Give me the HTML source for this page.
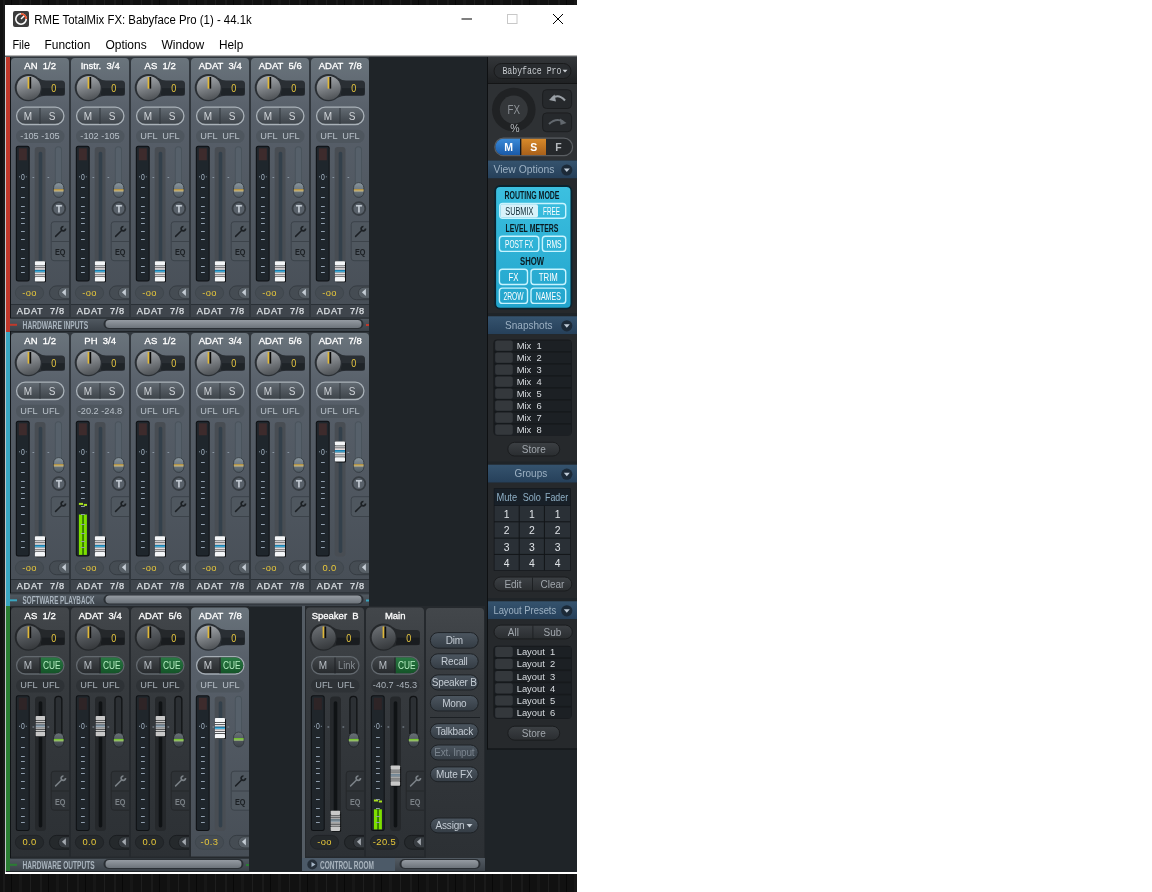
<!DOCTYPE html><html><head><meta charset="utf-8"><style>html,body{margin:0;padding:0;background:#fff;width:1152px;height:892px;overflow:hidden;position:relative} svg{will-change:transform}</style></head><body><svg width="1152" height="892" viewBox="0 0 1152 892" style="position:absolute;left:0;top:0;font-family:'Liberation Sans', sans-serif">
<defs>
<linearGradient id="panelA" x1="0" y1="0" x2="0" y2="1"><stop offset="0" stop-color="#6a747c"/><stop offset="0.2" stop-color="#58606a"/><stop offset="1" stop-color="#474e56"/></linearGradient>
<linearGradient id="panelB" x1="0" y1="0" x2="0" y2="1"><stop offset="0" stop-color="#43474b"/><stop offset="0.3" stop-color="#363a3e"/><stop offset="1" stop-color="#2c3034"/></linearGradient>
<linearGradient id="knobG" x1="0.3" y1="0" x2="0.6" y2="1"><stop offset="0" stop-color="#a8acb0"/><stop offset="0.5" stop-color="#7c8084"/><stop offset="1" stop-color="#4e5256"/></linearGradient>
<linearGradient id="knobGd" x1="0.3" y1="0" x2="0.6" y2="1"><stop offset="0" stop-color="#6c7074"/><stop offset="0.5" stop-color="#505458"/><stop offset="1" stop-color="#36393c"/></linearGradient>
<linearGradient id="valG" x1="0" y1="0" x2="0" y2="1"><stop offset="0" stop-color="#3a4046"/><stop offset="0.5" stop-color="#2c3136"/><stop offset="1" stop-color="#23272b"/></linearGradient>
<linearGradient id="msG" x1="0" y1="0" x2="0" y2="1"><stop offset="0" stop-color="#646c74"/><stop offset="1" stop-color="#3c4248"/></linearGradient>
<linearGradient id="msGd" x1="0" y1="0" x2="0" y2="1"><stop offset="0" stop-color="#44484c"/><stop offset="1" stop-color="#26292c"/></linearGradient>
<linearGradient id="cueG" x1="0" y1="0" x2="0" y2="1"><stop offset="0" stop-color="#2a7a44"/><stop offset="1" stop-color="#145428"/></linearGradient>
<linearGradient id="trimG" x1="0" y1="0" x2="0" y2="1"><stop offset="0" stop-color="#8a969e"/><stop offset="1" stop-color="#4e5860"/></linearGradient>
<linearGradient id="trimGd" x1="0" y1="0" x2="0" y2="1"><stop offset="0" stop-color="#6a7278"/><stop offset="1" stop-color="#3a4046"/></linearGradient>
<linearGradient id="barG" x1="0" y1="0" x2="0" y2="1"><stop offset="0" stop-color="#525a62"/><stop offset="1" stop-color="#3a4148"/></linearGradient>
<linearGradient id="scrG" x1="0" y1="0" x2="0" y2="1"><stop offset="0" stop-color="#959ba2"/><stop offset="1" stop-color="#6c737a"/></linearGradient>
<linearGradient id="hdrG" x1="0" y1="0" x2="0" y2="1"><stop offset="0" stop-color="#35536e"/><stop offset="1" stop-color="#26405a"/></linearGradient>
<linearGradient id="btnG" x1="0" y1="0" x2="0" y2="1"><stop offset="0" stop-color="#4c5660"/><stop offset="1" stop-color="#343c44"/></linearGradient>
<linearGradient id="btn2G" x1="0" y1="0" x2="0" y2="1"><stop offset="0" stop-color="#3c4044"/><stop offset="1" stop-color="#2a2d30"/></linearGradient>
<linearGradient id="blueG" x1="0" y1="0" x2="0" y2="1"><stop offset="0" stop-color="#3a8ad8"/><stop offset="1" stop-color="#1a5aa8"/></linearGradient>
<linearGradient id="orgG" x1="0" y1="0" x2="0" y2="1"><stop offset="0" stop-color="#d88a2a"/><stop offset="1" stop-color="#a8601a"/></linearGradient>
<linearGradient id="cyanG" x1="0" y1="0" x2="0" y2="1"><stop offset="0" stop-color="#3cc0e0"/><stop offset="1" stop-color="#22a4cc"/></linearGradient>
<linearGradient id="devG" x1="0" y1="0" x2="0" y2="1"><stop offset="0" stop-color="#333639"/><stop offset="1" stop-color="#1f2123"/></linearGradient>
<pattern id="wood" width="37" height="20" patternUnits="userSpaceOnUse"><rect width="37" height="20" fill="#111111"/><rect x="3" width="2" height="20" fill="#1a1a1a"/><rect x="11" width="1" height="20" fill="#080808"/><rect x="19" width="3" height="20" fill="#171717"/><rect x="30" width="1" height="20" fill="#1e1e1e"/></pattern>
</defs>
<rect x="0" y="0" width="1152" height="892" rx="0" fill="#ffffff" />
<rect x="0" y="0" width="577" height="5" rx="0" fill="url(#wood)" />
<rect x="0" y="0" width="5" height="892" rx="0" fill="url(#wood)" />
<rect x="0" y="874" width="577" height="18" rx="0" fill="url(#wood)" />
<rect x="5" y="5" width="572" height="869" rx="0" fill="#ffffff" />
<rect x="13" y="11" width="16" height="16" rx="2" fill="#3c3c3c" />
<circle cx="21" cy="19" r="5.2" fill="none" stroke="#fff" stroke-width="1.6"/>
<path d="M21 13.8 A5.2 5.2 0 0 1 26.2 19" fill="none" stroke="#e8502a" stroke-width="1.8"/>
<line x1="21" y1="19" x2="24" y2="16" stroke="#fff" stroke-width="1.4"/>
<text x="34.3" y="24.3" font-size="12" fill="#000" text-anchor="start" font-weight="normal" textLength="217.4" lengthAdjust="spacingAndGlyphs" >RME TotalMix FX: Babyface Pro (1) - 44.1k</text>
<rect x="461.5" y="18.5" width="10.5" height="1" rx="0" fill="#000" />
<rect x="507.5" y="14.5" width="9.5" height="9" fill="none" stroke="#c8c8c8" stroke-width="1"/>
<path d="M553 14 L563 24 M563 14 L553 24" stroke="#000" stroke-width="1"/>
<text x="12.4" y="49.2" font-size="12" fill="#000" text-anchor="start" font-weight="normal" textLength="17.6" lengthAdjust="spacingAndGlyphs" >File</text>
<text x="44.5" y="49.2" font-size="12" fill="#000" text-anchor="start" font-weight="normal" textLength="45.8" lengthAdjust="spacingAndGlyphs" >Function</text>
<text x="105.4" y="49.2" font-size="12" fill="#000" text-anchor="start" font-weight="normal" textLength="41.3" lengthAdjust="spacingAndGlyphs" >Options</text>
<text x="161.4" y="49.2" font-size="12" fill="#000" text-anchor="start" font-weight="normal" textLength="42.9" lengthAdjust="spacingAndGlyphs" >Window</text>
<text x="219" y="49.2" font-size="12" fill="#000" text-anchor="start" font-weight="normal" textLength="24.3" lengthAdjust="spacingAndGlyphs" >Help</text>
<rect x="5" y="55" width="572" height="1" rx="0" fill="#b4b4b4" />
<rect x="5" y="56" width="572" height="1" rx="0" fill="#5a5e62" />
<rect x="5" y="57" width="572" height="815" rx="0" fill="#1f2428" />
<rect x="10" y="57" width="359" height="274" rx="0" fill="#30363c" />
<rect x="10" y="57" width="1" height="814" rx="0" fill="#101316" />
<rect x="5" y="57" width="1" height="815" rx="0" fill="#c0c6c6" />
<rect x="6" y="57" width="4" height="275" rx="0" fill="#c0392b" />
<path d="M11 317 L11 62 Q11 58 15 58 L65 58 Q69 58 69 62 L69 317 Z" fill="url(#panelA)"/>
<text x="40.2" y="69.2" font-size="9.5" fill="#ffffff" text-anchor="middle" font-weight="normal" style="white-space:pre" stroke="#ffffff" stroke-width="0.3">AN  1/2</text>
<path d="M37.57 77.42 Q41.83 80.5 46 80.5 L61.5 80.5 Q65 80.5 65 84 L65 92.3 Q65 95.8 61.5 95.8 L46 95.8 Q41.83 95.8 37.57 97.78 Z" fill="#2a2f34"/>
<rect x="41" y="88.2" width="23.5" height="7.1" rx="0" fill="#1f2428" />
<circle cx="28.4" cy="87.6" r="13.7" fill="#2a2f34" />
<circle cx="28.7" cy="87.9" r="12" fill="url(#knobG)" />
<rect x="27.6" y="77" width="1.9" height="11.6" rx="0" fill="#e0b838" />
<rect x="29.5" y="77" width="1.7" height="11.6" rx="0" fill="#0c0c0c" />
<text x="53.8" y="92.4" font-size="10.6" fill="#e8c840" text-anchor="middle" font-weight="normal" textLength="5" lengthAdjust="spacingAndGlyphs" >0</text>
<rect x="16.6" y="107.2" width="47.3" height="17.3" rx="8.6" fill="url(#msG)" stroke="#a9b1b8" stroke-width="1.3"/>
<rect x="39.5" y="108" width="1" height="16" rx="0" fill="#30363c" />
<text x="28" y="119.6" font-size="10" fill="#d0d4d8" text-anchor="middle" font-weight="normal" >M</text>
<text x="52" y="119.6" font-size="10" fill="#d0d4d8" text-anchor="middle" font-weight="normal" >S</text>
<rect x="16" y="129.7" width="48.5" height="13.3" rx="6.5" fill="#4e565e" />
<text x="40" y="138.6" font-size="9.2" fill="#b9c1c9" text-anchor="middle" font-weight="normal" style="white-space:pre">-105 -105</text>
<rect x="15.8" y="145.8" width="13.9" height="135.6" rx="2.5" fill="#0e1114" />
<rect x="16.8" y="146.8" width="11.9" height="133.6" rx="1.5" fill="#1f262c" />
<rect x="18.8" y="148.3" width="8" height="12" rx="0" fill="#3d2b2c" />
<text x="22.9" y="179.6" font-size="9" fill="#a8b8c8" text-anchor="middle" font-weight="normal" textLength="3.8" lengthAdjust="spacingAndGlyphs" >0</text>
<rect x="19" y="176.3" width="1" height="1" rx="0" fill="#8a9aa8" />
<rect x="25.8" y="176.3" width="1" height="1" rx="0" fill="#8a9aa8" />
<rect x="21" y="187" width="3.8" height="1" rx="0" fill="#8e9cab" />
<rect x="21" y="197" width="3.8" height="1" rx="0" fill="#8e9cab" />
<rect x="21" y="206" width="3.8" height="1" rx="0" fill="#8e9cab" />
<rect x="21" y="212" width="3.8" height="1" rx="0" fill="#8e9cab" />
<rect x="21" y="218" width="3.8" height="1" rx="0" fill="#8e9cab" />
<rect x="21" y="223" width="3.8" height="1" rx="0" fill="#8e9cab" />
<rect x="21" y="231" width="3.8" height="1" rx="0" fill="#8e9cab" />
<rect x="21" y="239" width="3.8" height="1" rx="0" fill="#8e9cab" />
<rect x="21" y="249" width="3.8" height="1" rx="0" fill="#8e9cab" />
<rect x="21" y="258" width="3.8" height="1" rx="0" fill="#8e9cab" />
<rect x="21" y="266" width="3.8" height="1" rx="0" fill="#8e9cab" />
<rect x="21" y="272" width="3.8" height="1" rx="0" fill="#8e9cab" />
<rect x="34.7" y="147" width="10.8" height="134.5" rx="3" fill="#484d53" />
<rect x="38.7" y="151.7" width="3.6" height="126.3" rx="1.8" fill="#33404b" />
<rect x="32.5" y="177" width="1.7" height="1" rx="0" fill="#8a96a2" />
<rect x="47.5" y="177" width="1.7" height="1" rx="0" fill="#8a96a2" />
<rect x="54.8" y="146.3" width="7.2" height="49.7" rx="3.6" fill="#4a545c" />
<rect x="55.8" y="147.3" width="5.2" height="47.7" rx="2.6" fill="#56606a" />
<rect x="53.6" y="182.6" width="10.2" height="14.8" rx="5" fill="url(#trimG)" stroke="#30363c" stroke-width="0.8"/>
<rect x="53.8" y="189.3" width="9.8" height="1.3" rx="0" fill="#d0a030" />
<rect x="53.8" y="190.6" width="9.8" height="0.8" rx="0" fill="#e8d898" />
<circle cx="58.9" cy="208.6" r="6.4" fill="#59616a" stroke="#363c42" stroke-width="1.8"/>
<rect x="56" y="205" width="5.9" height="1.6" rx="0" fill="#c0c8d0" />
<rect x="58.1" y="205" width="1.7" height="7.5" rx="0" fill="#c0c8d0" />
<path d="M69 221.7 L54 221.7 Q51.2 221.7 51.2 224.5 L51.2 257.9 Q51.2 260.7 54 260.7 L69 260.7" fill="#4f575f" stroke="#3c434a" stroke-width="1"/>
<path d="M55.6 236.4 L61.8 230.2" stroke="#1c2024" stroke-width="1.5" stroke-linecap="round"/>
<path d="M65.5 228.5 A2.2 2.2 0 1 1 63.5 226.5" fill="none" stroke="#1c2024" stroke-width="1.7"/>
<rect x="51.5" y="241" width="17.5" height="1" rx="0" fill="#3c434a" />
<text x="60.2" y="255.2" font-size="9.6" fill="#1c2024" text-anchor="middle" font-weight="bold" textLength="10.5" lengthAdjust="spacingAndGlyphs" >EQ</text>
<rect x="35.9" y="262.3" width="10.1" height="20" rx="1" fill="#0e1012" />
<rect x="34.9" y="261.3" width="10.1" height="20.2" rx="0.8" fill="#2a2c2e" />
<rect x="34.9" y="261.3" width="10.1" height="4.2" rx="0.8" fill="#f4f6f8" />
<rect x="34.9" y="266.2" width="10.1" height="1.2" rx="0" fill="#f4f6f8" />
<rect x="34.9" y="268.1" width="10.1" height="1.8" rx="0" fill="#e4dcdc" />
<rect x="34.9" y="269.9" width="10.1" height="1.2" rx="0" fill="#1c80b0" />
<rect x="34.9" y="271.1" width="10.1" height="1.4" rx="0" fill="#48b4e0" />
<rect x="34.9" y="272.5" width="10.1" height="2" rx="0" fill="#e4dcdc" />
<rect x="34.9" y="275.2" width="10.1" height="1.2" rx="0" fill="#f4f6f8" />
<rect x="34.9" y="277.1" width="10.1" height="4.4" rx="0.8" fill="#f4f6f8" />
<rect x="15.4" y="285.9" width="28.2" height="13.8" rx="6.9" fill="#454c53" stroke="#3e454b" stroke-width="0.8"/>
<text x="29.5" y="295.8" font-size="9.4" fill="#e8c83a" text-anchor="middle" font-weight="normal" letter-spacing="0.4">-oo</text>
<path d="M69 285.9 L56.4 285.9 A6.9 6.9 0 0 0 56.4 299.7 L69 299.7" fill="#454c53" stroke="#363c42" stroke-width="1"/>
<path d="M69 287.2 L64 287.2 A5.6 5.6 0 0 0 64 298.4 L69 298.4" fill="#596168" stroke="#3a4046" stroke-width="1"/>
<path d="M61.9 292.3 L65.9 288.7 L65.9 295.9 Z" fill="#c4ccd4"/>
<rect x="11" y="304" width="58" height="1" rx="0" fill="#2a3036" />
<rect x="11" y="305" width="58" height="12" rx="0" fill="#3f454c" />
<text x="40.8" y="313.8" font-size="9.2" fill="#dce0e4" text-anchor="middle" font-weight="normal" style="white-space:pre" letter-spacing="0.75" stroke="#dce0e4" stroke-width="0.25">ADAT  7/8</text>
<path d="M71 317 L71 62 Q71 58 75 58 L125 58 Q129 58 129 62 L129 317 Z" fill="url(#panelA)"/>
<text x="100.2" y="69.2" font-size="9.5" fill="#ffffff" text-anchor="middle" font-weight="normal" style="white-space:pre" stroke="#ffffff" stroke-width="0.3">Instr.  3/4</text>
<path d="M97.57 77.42 Q101.83 80.5 106 80.5 L121.5 80.5 Q125 80.5 125 84 L125 92.3 Q125 95.8 121.5 95.8 L106 95.8 Q101.83 95.8 97.57 97.78 Z" fill="#2a2f34"/>
<rect x="101" y="88.2" width="23.5" height="7.1" rx="0" fill="#1f2428" />
<circle cx="88.4" cy="87.6" r="13.7" fill="#2a2f34" />
<circle cx="88.7" cy="87.9" r="12" fill="url(#knobG)" />
<rect x="87.6" y="77" width="1.9" height="11.6" rx="0" fill="#e0b838" />
<rect x="89.5" y="77" width="1.7" height="11.6" rx="0" fill="#0c0c0c" />
<text x="113.8" y="92.4" font-size="10.6" fill="#e8c840" text-anchor="middle" font-weight="normal" textLength="5" lengthAdjust="spacingAndGlyphs" >0</text>
<rect x="76.6" y="107.2" width="47.3" height="17.3" rx="8.6" fill="url(#msG)" stroke="#a9b1b8" stroke-width="1.3"/>
<rect x="99.5" y="108" width="1" height="16" rx="0" fill="#30363c" />
<text x="88" y="119.6" font-size="10" fill="#d0d4d8" text-anchor="middle" font-weight="normal" >M</text>
<text x="112" y="119.6" font-size="10" fill="#d0d4d8" text-anchor="middle" font-weight="normal" >S</text>
<rect x="76" y="129.7" width="48.5" height="13.3" rx="6.5" fill="#4e565e" />
<text x="100" y="138.6" font-size="9.2" fill="#b9c1c9" text-anchor="middle" font-weight="normal" style="white-space:pre">-102 -105</text>
<rect x="75.8" y="145.8" width="13.9" height="135.6" rx="2.5" fill="#0e1114" />
<rect x="76.8" y="146.8" width="11.9" height="133.6" rx="1.5" fill="#1f262c" />
<rect x="78.8" y="148.3" width="8" height="12" rx="0" fill="#3d2b2c" />
<text x="82.9" y="179.6" font-size="9" fill="#a8b8c8" text-anchor="middle" font-weight="normal" textLength="3.8" lengthAdjust="spacingAndGlyphs" >0</text>
<rect x="79" y="176.3" width="1" height="1" rx="0" fill="#8a9aa8" />
<rect x="85.8" y="176.3" width="1" height="1" rx="0" fill="#8a9aa8" />
<rect x="81" y="187" width="3.8" height="1" rx="0" fill="#8e9cab" />
<rect x="81" y="197" width="3.8" height="1" rx="0" fill="#8e9cab" />
<rect x="81" y="206" width="3.8" height="1" rx="0" fill="#8e9cab" />
<rect x="81" y="212" width="3.8" height="1" rx="0" fill="#8e9cab" />
<rect x="81" y="218" width="3.8" height="1" rx="0" fill="#8e9cab" />
<rect x="81" y="223" width="3.8" height="1" rx="0" fill="#8e9cab" />
<rect x="81" y="231" width="3.8" height="1" rx="0" fill="#8e9cab" />
<rect x="81" y="239" width="3.8" height="1" rx="0" fill="#8e9cab" />
<rect x="81" y="249" width="3.8" height="1" rx="0" fill="#8e9cab" />
<rect x="81" y="258" width="3.8" height="1" rx="0" fill="#8e9cab" />
<rect x="81" y="266" width="3.8" height="1" rx="0" fill="#8e9cab" />
<rect x="81" y="272" width="3.8" height="1" rx="0" fill="#8e9cab" />
<rect x="94.7" y="147" width="10.8" height="134.5" rx="3" fill="#484d53" />
<rect x="98.7" y="151.7" width="3.6" height="126.3" rx="1.8" fill="#33404b" />
<rect x="92.5" y="177" width="1.7" height="1" rx="0" fill="#8a96a2" />
<rect x="107.5" y="177" width="1.7" height="1" rx="0" fill="#8a96a2" />
<rect x="114.8" y="146.3" width="7.2" height="49.7" rx="3.6" fill="#4a545c" />
<rect x="115.8" y="147.3" width="5.2" height="47.7" rx="2.6" fill="#56606a" />
<rect x="113.6" y="182.6" width="10.2" height="14.8" rx="5" fill="url(#trimG)" stroke="#30363c" stroke-width="0.8"/>
<rect x="113.8" y="189.3" width="9.8" height="1.3" rx="0" fill="#d0a030" />
<rect x="113.8" y="190.6" width="9.8" height="0.8" rx="0" fill="#e8d898" />
<circle cx="118.9" cy="208.6" r="6.4" fill="#59616a" stroke="#363c42" stroke-width="1.8"/>
<rect x="116" y="205" width="5.9" height="1.6" rx="0" fill="#c0c8d0" />
<rect x="118.1" y="205" width="1.7" height="7.5" rx="0" fill="#c0c8d0" />
<path d="M129 221.7 L114 221.7 Q111.2 221.7 111.2 224.5 L111.2 257.9 Q111.2 260.7 114 260.7 L129 260.7" fill="#4f575f" stroke="#3c434a" stroke-width="1"/>
<path d="M115.6 236.4 L121.8 230.2" stroke="#1c2024" stroke-width="1.5" stroke-linecap="round"/>
<path d="M125.5 228.5 A2.2 2.2 0 1 1 123.5 226.5" fill="none" stroke="#1c2024" stroke-width="1.7"/>
<rect x="111.5" y="241" width="17.5" height="1" rx="0" fill="#3c434a" />
<text x="120.2" y="255.2" font-size="9.6" fill="#1c2024" text-anchor="middle" font-weight="bold" textLength="10.5" lengthAdjust="spacingAndGlyphs" >EQ</text>
<rect x="95.9" y="262.3" width="10.1" height="20" rx="1" fill="#0e1012" />
<rect x="94.9" y="261.3" width="10.1" height="20.2" rx="0.8" fill="#2a2c2e" />
<rect x="94.9" y="261.3" width="10.1" height="4.2" rx="0.8" fill="#f4f6f8" />
<rect x="94.9" y="266.2" width="10.1" height="1.2" rx="0" fill="#f4f6f8" />
<rect x="94.9" y="268.1" width="10.1" height="1.8" rx="0" fill="#e4dcdc" />
<rect x="94.9" y="269.9" width="10.1" height="1.2" rx="0" fill="#1c80b0" />
<rect x="94.9" y="271.1" width="10.1" height="1.4" rx="0" fill="#48b4e0" />
<rect x="94.9" y="272.5" width="10.1" height="2" rx="0" fill="#e4dcdc" />
<rect x="94.9" y="275.2" width="10.1" height="1.2" rx="0" fill="#f4f6f8" />
<rect x="94.9" y="277.1" width="10.1" height="4.4" rx="0.8" fill="#f4f6f8" />
<rect x="75.4" y="285.9" width="28.2" height="13.8" rx="6.9" fill="#454c53" stroke="#3e454b" stroke-width="0.8"/>
<text x="89.5" y="295.8" font-size="9.4" fill="#e8c83a" text-anchor="middle" font-weight="normal" letter-spacing="0.4">-oo</text>
<path d="M129 285.9 L116.4 285.9 A6.9 6.9 0 0 0 116.4 299.7 L129 299.7" fill="#454c53" stroke="#363c42" stroke-width="1"/>
<path d="M129 287.2 L124 287.2 A5.6 5.6 0 0 0 124 298.4 L129 298.4" fill="#596168" stroke="#3a4046" stroke-width="1"/>
<path d="M121.9 292.3 L125.9 288.7 L125.9 295.9 Z" fill="#c4ccd4"/>
<rect x="71" y="304" width="58" height="1" rx="0" fill="#2a3036" />
<rect x="71" y="305" width="58" height="12" rx="0" fill="#3f454c" />
<text x="100.8" y="313.8" font-size="9.2" fill="#dce0e4" text-anchor="middle" font-weight="normal" style="white-space:pre" letter-spacing="0.75" stroke="#dce0e4" stroke-width="0.25">ADAT  7/8</text>
<path d="M131 317 L131 62 Q131 58 135 58 L185 58 Q189 58 189 62 L189 317 Z" fill="url(#panelA)"/>
<text x="160.2" y="69.2" font-size="9.5" fill="#ffffff" text-anchor="middle" font-weight="normal" style="white-space:pre" stroke="#ffffff" stroke-width="0.3">AS  1/2</text>
<path d="M157.57 77.42 Q161.83 80.5 166 80.5 L181.5 80.5 Q185 80.5 185 84 L185 92.3 Q185 95.8 181.5 95.8 L166 95.8 Q161.83 95.8 157.57 97.78 Z" fill="#2a2f34"/>
<rect x="161" y="88.2" width="23.5" height="7.1" rx="0" fill="#1f2428" />
<circle cx="148.4" cy="87.6" r="13.7" fill="#2a2f34" />
<circle cx="148.7" cy="87.9" r="12" fill="url(#knobG)" />
<rect x="147.6" y="77" width="1.9" height="11.6" rx="0" fill="#e0b838" />
<rect x="149.5" y="77" width="1.7" height="11.6" rx="0" fill="#0c0c0c" />
<text x="173.8" y="92.4" font-size="10.6" fill="#e8c840" text-anchor="middle" font-weight="normal" textLength="5" lengthAdjust="spacingAndGlyphs" >0</text>
<rect x="136.6" y="107.2" width="47.3" height="17.3" rx="8.6" fill="url(#msG)" stroke="#a9b1b8" stroke-width="1.3"/>
<rect x="159.5" y="108" width="1" height="16" rx="0" fill="#30363c" />
<text x="148" y="119.6" font-size="10" fill="#d0d4d8" text-anchor="middle" font-weight="normal" >M</text>
<text x="172" y="119.6" font-size="10" fill="#d0d4d8" text-anchor="middle" font-weight="normal" >S</text>
<rect x="136" y="129.7" width="48.5" height="13.3" rx="6.5" fill="#4e565e" />
<text x="160" y="138.6" font-size="9.2" fill="#b9c1c9" text-anchor="middle" font-weight="normal" style="white-space:pre">UFL  UFL</text>
<rect x="135.8" y="145.8" width="13.9" height="135.6" rx="2.5" fill="#0e1114" />
<rect x="136.8" y="146.8" width="11.9" height="133.6" rx="1.5" fill="#1f262c" />
<rect x="138.8" y="148.3" width="8" height="12" rx="0" fill="#3d2b2c" />
<text x="142.9" y="179.6" font-size="9" fill="#a8b8c8" text-anchor="middle" font-weight="normal" textLength="3.8" lengthAdjust="spacingAndGlyphs" >0</text>
<rect x="139" y="176.3" width="1" height="1" rx="0" fill="#8a9aa8" />
<rect x="145.8" y="176.3" width="1" height="1" rx="0" fill="#8a9aa8" />
<rect x="141" y="187" width="3.8" height="1" rx="0" fill="#8e9cab" />
<rect x="141" y="197" width="3.8" height="1" rx="0" fill="#8e9cab" />
<rect x="141" y="206" width="3.8" height="1" rx="0" fill="#8e9cab" />
<rect x="141" y="212" width="3.8" height="1" rx="0" fill="#8e9cab" />
<rect x="141" y="218" width="3.8" height="1" rx="0" fill="#8e9cab" />
<rect x="141" y="223" width="3.8" height="1" rx="0" fill="#8e9cab" />
<rect x="141" y="231" width="3.8" height="1" rx="0" fill="#8e9cab" />
<rect x="141" y="239" width="3.8" height="1" rx="0" fill="#8e9cab" />
<rect x="141" y="249" width="3.8" height="1" rx="0" fill="#8e9cab" />
<rect x="141" y="258" width="3.8" height="1" rx="0" fill="#8e9cab" />
<rect x="141" y="266" width="3.8" height="1" rx="0" fill="#8e9cab" />
<rect x="141" y="272" width="3.8" height="1" rx="0" fill="#8e9cab" />
<rect x="154.7" y="147" width="10.8" height="134.5" rx="3" fill="#484d53" />
<rect x="158.7" y="151.7" width="3.6" height="126.3" rx="1.8" fill="#33404b" />
<rect x="152.5" y="177" width="1.7" height="1" rx="0" fill="#8a96a2" />
<rect x="167.5" y="177" width="1.7" height="1" rx="0" fill="#8a96a2" />
<rect x="174.8" y="146.3" width="7.2" height="49.7" rx="3.6" fill="#4a545c" />
<rect x="175.8" y="147.3" width="5.2" height="47.7" rx="2.6" fill="#56606a" />
<rect x="173.6" y="182.6" width="10.2" height="14.8" rx="5" fill="url(#trimG)" stroke="#30363c" stroke-width="0.8"/>
<rect x="173.8" y="189.3" width="9.8" height="1.3" rx="0" fill="#d0a030" />
<rect x="173.8" y="190.6" width="9.8" height="0.8" rx="0" fill="#e8d898" />
<circle cx="178.9" cy="208.6" r="6.4" fill="#59616a" stroke="#363c42" stroke-width="1.8"/>
<rect x="176" y="205" width="5.9" height="1.6" rx="0" fill="#c0c8d0" />
<rect x="178.1" y="205" width="1.7" height="7.5" rx="0" fill="#c0c8d0" />
<path d="M189 221.7 L174 221.7 Q171.2 221.7 171.2 224.5 L171.2 257.9 Q171.2 260.7 174 260.7 L189 260.7" fill="#4f575f" stroke="#3c434a" stroke-width="1"/>
<path d="M175.6 236.4 L181.8 230.2" stroke="#1c2024" stroke-width="1.5" stroke-linecap="round"/>
<path d="M185.5 228.5 A2.2 2.2 0 1 1 183.5 226.5" fill="none" stroke="#1c2024" stroke-width="1.7"/>
<rect x="171.5" y="241" width="17.5" height="1" rx="0" fill="#3c434a" />
<text x="180.2" y="255.2" font-size="9.6" fill="#1c2024" text-anchor="middle" font-weight="bold" textLength="10.5" lengthAdjust="spacingAndGlyphs" >EQ</text>
<rect x="155.9" y="262.3" width="10.1" height="20" rx="1" fill="#0e1012" />
<rect x="154.9" y="261.3" width="10.1" height="20.2" rx="0.8" fill="#2a2c2e" />
<rect x="154.9" y="261.3" width="10.1" height="4.2" rx="0.8" fill="#f4f6f8" />
<rect x="154.9" y="266.2" width="10.1" height="1.2" rx="0" fill="#f4f6f8" />
<rect x="154.9" y="268.1" width="10.1" height="1.8" rx="0" fill="#e4dcdc" />
<rect x="154.9" y="269.9" width="10.1" height="1.2" rx="0" fill="#1c80b0" />
<rect x="154.9" y="271.1" width="10.1" height="1.4" rx="0" fill="#48b4e0" />
<rect x="154.9" y="272.5" width="10.1" height="2" rx="0" fill="#e4dcdc" />
<rect x="154.9" y="275.2" width="10.1" height="1.2" rx="0" fill="#f4f6f8" />
<rect x="154.9" y="277.1" width="10.1" height="4.4" rx="0.8" fill="#f4f6f8" />
<rect x="135.4" y="285.9" width="28.2" height="13.8" rx="6.9" fill="#454c53" stroke="#3e454b" stroke-width="0.8"/>
<text x="149.5" y="295.8" font-size="9.4" fill="#e8c83a" text-anchor="middle" font-weight="normal" letter-spacing="0.4">-oo</text>
<path d="M189 285.9 L176.4 285.9 A6.9 6.9 0 0 0 176.4 299.7 L189 299.7" fill="#454c53" stroke="#363c42" stroke-width="1"/>
<path d="M189 287.2 L184 287.2 A5.6 5.6 0 0 0 184 298.4 L189 298.4" fill="#596168" stroke="#3a4046" stroke-width="1"/>
<path d="M181.9 292.3 L185.9 288.7 L185.9 295.9 Z" fill="#c4ccd4"/>
<rect x="131" y="304" width="58" height="1" rx="0" fill="#2a3036" />
<rect x="131" y="305" width="58" height="12" rx="0" fill="#3f454c" />
<text x="160.8" y="313.8" font-size="9.2" fill="#dce0e4" text-anchor="middle" font-weight="normal" style="white-space:pre" letter-spacing="0.75" stroke="#dce0e4" stroke-width="0.25">ADAT  7/8</text>
<path d="M191 317 L191 62 Q191 58 195 58 L245 58 Q249 58 249 62 L249 317 Z" fill="url(#panelA)"/>
<text x="220.2" y="69.2" font-size="9.5" fill="#ffffff" text-anchor="middle" font-weight="normal" style="white-space:pre" stroke="#ffffff" stroke-width="0.3">ADAT  3/4</text>
<path d="M217.57 77.42 Q221.83 80.5 226 80.5 L241.5 80.5 Q245 80.5 245 84 L245 92.3 Q245 95.8 241.5 95.8 L226 95.8 Q221.83 95.8 217.57 97.78 Z" fill="#2a2f34"/>
<rect x="221" y="88.2" width="23.5" height="7.1" rx="0" fill="#1f2428" />
<circle cx="208.4" cy="87.6" r="13.7" fill="#2a2f34" />
<circle cx="208.7" cy="87.9" r="12" fill="url(#knobG)" />
<rect x="207.6" y="77" width="1.9" height="11.6" rx="0" fill="#e0b838" />
<rect x="209.5" y="77" width="1.7" height="11.6" rx="0" fill="#0c0c0c" />
<text x="233.8" y="92.4" font-size="10.6" fill="#e8c840" text-anchor="middle" font-weight="normal" textLength="5" lengthAdjust="spacingAndGlyphs" >0</text>
<rect x="196.6" y="107.2" width="47.3" height="17.3" rx="8.6" fill="url(#msG)" stroke="#a9b1b8" stroke-width="1.3"/>
<rect x="219.5" y="108" width="1" height="16" rx="0" fill="#30363c" />
<text x="208" y="119.6" font-size="10" fill="#d0d4d8" text-anchor="middle" font-weight="normal" >M</text>
<text x="232" y="119.6" font-size="10" fill="#d0d4d8" text-anchor="middle" font-weight="normal" >S</text>
<rect x="196" y="129.7" width="48.5" height="13.3" rx="6.5" fill="#4e565e" />
<text x="220" y="138.6" font-size="9.2" fill="#b9c1c9" text-anchor="middle" font-weight="normal" style="white-space:pre">UFL  UFL</text>
<rect x="195.8" y="145.8" width="13.9" height="135.6" rx="2.5" fill="#0e1114" />
<rect x="196.8" y="146.8" width="11.9" height="133.6" rx="1.5" fill="#1f262c" />
<rect x="198.8" y="148.3" width="8" height="12" rx="0" fill="#3d2b2c" />
<text x="202.9" y="179.6" font-size="9" fill="#a8b8c8" text-anchor="middle" font-weight="normal" textLength="3.8" lengthAdjust="spacingAndGlyphs" >0</text>
<rect x="199" y="176.3" width="1" height="1" rx="0" fill="#8a9aa8" />
<rect x="205.8" y="176.3" width="1" height="1" rx="0" fill="#8a9aa8" />
<rect x="201" y="187" width="3.8" height="1" rx="0" fill="#8e9cab" />
<rect x="201" y="197" width="3.8" height="1" rx="0" fill="#8e9cab" />
<rect x="201" y="206" width="3.8" height="1" rx="0" fill="#8e9cab" />
<rect x="201" y="212" width="3.8" height="1" rx="0" fill="#8e9cab" />
<rect x="201" y="218" width="3.8" height="1" rx="0" fill="#8e9cab" />
<rect x="201" y="223" width="3.8" height="1" rx="0" fill="#8e9cab" />
<rect x="201" y="231" width="3.8" height="1" rx="0" fill="#8e9cab" />
<rect x="201" y="239" width="3.8" height="1" rx="0" fill="#8e9cab" />
<rect x="201" y="249" width="3.8" height="1" rx="0" fill="#8e9cab" />
<rect x="201" y="258" width="3.8" height="1" rx="0" fill="#8e9cab" />
<rect x="201" y="266" width="3.8" height="1" rx="0" fill="#8e9cab" />
<rect x="201" y="272" width="3.8" height="1" rx="0" fill="#8e9cab" />
<rect x="214.7" y="147" width="10.8" height="134.5" rx="3" fill="#484d53" />
<rect x="218.7" y="151.7" width="3.6" height="126.3" rx="1.8" fill="#33404b" />
<rect x="212.5" y="177" width="1.7" height="1" rx="0" fill="#8a96a2" />
<rect x="227.5" y="177" width="1.7" height="1" rx="0" fill="#8a96a2" />
<rect x="234.8" y="146.3" width="7.2" height="49.7" rx="3.6" fill="#4a545c" />
<rect x="235.8" y="147.3" width="5.2" height="47.7" rx="2.6" fill="#56606a" />
<rect x="233.6" y="182.6" width="10.2" height="14.8" rx="5" fill="url(#trimG)" stroke="#30363c" stroke-width="0.8"/>
<rect x="233.8" y="189.3" width="9.8" height="1.3" rx="0" fill="#d0a030" />
<rect x="233.8" y="190.6" width="9.8" height="0.8" rx="0" fill="#e8d898" />
<circle cx="238.9" cy="208.6" r="6.4" fill="#59616a" stroke="#363c42" stroke-width="1.8"/>
<rect x="236" y="205" width="5.9" height="1.6" rx="0" fill="#c0c8d0" />
<rect x="238.1" y="205" width="1.7" height="7.5" rx="0" fill="#c0c8d0" />
<path d="M249 221.7 L234 221.7 Q231.2 221.7 231.2 224.5 L231.2 257.9 Q231.2 260.7 234 260.7 L249 260.7" fill="#4f575f" stroke="#3c434a" stroke-width="1"/>
<path d="M235.6 236.4 L241.8 230.2" stroke="#1c2024" stroke-width="1.5" stroke-linecap="round"/>
<path d="M245.5 228.5 A2.2 2.2 0 1 1 243.5 226.5" fill="none" stroke="#1c2024" stroke-width="1.7"/>
<rect x="231.5" y="241" width="17.5" height="1" rx="0" fill="#3c434a" />
<text x="240.2" y="255.2" font-size="9.6" fill="#1c2024" text-anchor="middle" font-weight="bold" textLength="10.5" lengthAdjust="spacingAndGlyphs" >EQ</text>
<rect x="215.9" y="262.3" width="10.1" height="20" rx="1" fill="#0e1012" />
<rect x="214.9" y="261.3" width="10.1" height="20.2" rx="0.8" fill="#2a2c2e" />
<rect x="214.9" y="261.3" width="10.1" height="4.2" rx="0.8" fill="#f4f6f8" />
<rect x="214.9" y="266.2" width="10.1" height="1.2" rx="0" fill="#f4f6f8" />
<rect x="214.9" y="268.1" width="10.1" height="1.8" rx="0" fill="#e4dcdc" />
<rect x="214.9" y="269.9" width="10.1" height="1.2" rx="0" fill="#1c80b0" />
<rect x="214.9" y="271.1" width="10.1" height="1.4" rx="0" fill="#48b4e0" />
<rect x="214.9" y="272.5" width="10.1" height="2" rx="0" fill="#e4dcdc" />
<rect x="214.9" y="275.2" width="10.1" height="1.2" rx="0" fill="#f4f6f8" />
<rect x="214.9" y="277.1" width="10.1" height="4.4" rx="0.8" fill="#f4f6f8" />
<rect x="195.4" y="285.9" width="28.2" height="13.8" rx="6.9" fill="#454c53" stroke="#3e454b" stroke-width="0.8"/>
<text x="209.5" y="295.8" font-size="9.4" fill="#e8c83a" text-anchor="middle" font-weight="normal" letter-spacing="0.4">-oo</text>
<path d="M249 285.9 L236.4 285.9 A6.9 6.9 0 0 0 236.4 299.7 L249 299.7" fill="#454c53" stroke="#363c42" stroke-width="1"/>
<path d="M249 287.2 L244 287.2 A5.6 5.6 0 0 0 244 298.4 L249 298.4" fill="#596168" stroke="#3a4046" stroke-width="1"/>
<path d="M241.9 292.3 L245.9 288.7 L245.9 295.9 Z" fill="#c4ccd4"/>
<rect x="191" y="304" width="58" height="1" rx="0" fill="#2a3036" />
<rect x="191" y="305" width="58" height="12" rx="0" fill="#3f454c" />
<text x="220.8" y="313.8" font-size="9.2" fill="#dce0e4" text-anchor="middle" font-weight="normal" style="white-space:pre" letter-spacing="0.75" stroke="#dce0e4" stroke-width="0.25">ADAT  7/8</text>
<path d="M251 317 L251 62 Q251 58 255 58 L305 58 Q309 58 309 62 L309 317 Z" fill="url(#panelA)"/>
<text x="280.2" y="69.2" font-size="9.5" fill="#ffffff" text-anchor="middle" font-weight="normal" style="white-space:pre" stroke="#ffffff" stroke-width="0.3">ADAT  5/6</text>
<path d="M277.57 77.42 Q281.83 80.5 286 80.5 L301.5 80.5 Q305 80.5 305 84 L305 92.3 Q305 95.8 301.5 95.8 L286 95.8 Q281.83 95.8 277.57 97.78 Z" fill="#2a2f34"/>
<rect x="281" y="88.2" width="23.5" height="7.1" rx="0" fill="#1f2428" />
<circle cx="268.4" cy="87.6" r="13.7" fill="#2a2f34" />
<circle cx="268.7" cy="87.9" r="12" fill="url(#knobG)" />
<rect x="267.6" y="77" width="1.9" height="11.6" rx="0" fill="#e0b838" />
<rect x="269.5" y="77" width="1.7" height="11.6" rx="0" fill="#0c0c0c" />
<text x="293.8" y="92.4" font-size="10.6" fill="#e8c840" text-anchor="middle" font-weight="normal" textLength="5" lengthAdjust="spacingAndGlyphs" >0</text>
<rect x="256.6" y="107.2" width="47.3" height="17.3" rx="8.6" fill="url(#msG)" stroke="#a9b1b8" stroke-width="1.3"/>
<rect x="279.5" y="108" width="1" height="16" rx="0" fill="#30363c" />
<text x="268" y="119.6" font-size="10" fill="#d0d4d8" text-anchor="middle" font-weight="normal" >M</text>
<text x="292" y="119.6" font-size="10" fill="#d0d4d8" text-anchor="middle" font-weight="normal" >S</text>
<rect x="256" y="129.7" width="48.5" height="13.3" rx="6.5" fill="#4e565e" />
<text x="280" y="138.6" font-size="9.2" fill="#b9c1c9" text-anchor="middle" font-weight="normal" style="white-space:pre">UFL  UFL</text>
<rect x="255.8" y="145.8" width="13.9" height="135.6" rx="2.5" fill="#0e1114" />
<rect x="256.8" y="146.8" width="11.9" height="133.6" rx="1.5" fill="#1f262c" />
<rect x="258.8" y="148.3" width="8" height="12" rx="0" fill="#3d2b2c" />
<text x="262.9" y="179.6" font-size="9" fill="#a8b8c8" text-anchor="middle" font-weight="normal" textLength="3.8" lengthAdjust="spacingAndGlyphs" >0</text>
<rect x="259" y="176.3" width="1" height="1" rx="0" fill="#8a9aa8" />
<rect x="265.8" y="176.3" width="1" height="1" rx="0" fill="#8a9aa8" />
<rect x="261" y="187" width="3.8" height="1" rx="0" fill="#8e9cab" />
<rect x="261" y="197" width="3.8" height="1" rx="0" fill="#8e9cab" />
<rect x="261" y="206" width="3.8" height="1" rx="0" fill="#8e9cab" />
<rect x="261" y="212" width="3.8" height="1" rx="0" fill="#8e9cab" />
<rect x="261" y="218" width="3.8" height="1" rx="0" fill="#8e9cab" />
<rect x="261" y="223" width="3.8" height="1" rx="0" fill="#8e9cab" />
<rect x="261" y="231" width="3.8" height="1" rx="0" fill="#8e9cab" />
<rect x="261" y="239" width="3.8" height="1" rx="0" fill="#8e9cab" />
<rect x="261" y="249" width="3.8" height="1" rx="0" fill="#8e9cab" />
<rect x="261" y="258" width="3.8" height="1" rx="0" fill="#8e9cab" />
<rect x="261" y="266" width="3.8" height="1" rx="0" fill="#8e9cab" />
<rect x="261" y="272" width="3.8" height="1" rx="0" fill="#8e9cab" />
<rect x="274.7" y="147" width="10.8" height="134.5" rx="3" fill="#484d53" />
<rect x="278.7" y="151.7" width="3.6" height="126.3" rx="1.8" fill="#33404b" />
<rect x="272.5" y="177" width="1.7" height="1" rx="0" fill="#8a96a2" />
<rect x="287.5" y="177" width="1.7" height="1" rx="0" fill="#8a96a2" />
<rect x="294.8" y="146.3" width="7.2" height="49.7" rx="3.6" fill="#4a545c" />
<rect x="295.8" y="147.3" width="5.2" height="47.7" rx="2.6" fill="#56606a" />
<rect x="293.6" y="182.6" width="10.2" height="14.8" rx="5" fill="url(#trimG)" stroke="#30363c" stroke-width="0.8"/>
<rect x="293.8" y="189.3" width="9.8" height="1.3" rx="0" fill="#d0a030" />
<rect x="293.8" y="190.6" width="9.8" height="0.8" rx="0" fill="#e8d898" />
<circle cx="298.9" cy="208.6" r="6.4" fill="#59616a" stroke="#363c42" stroke-width="1.8"/>
<rect x="296" y="205" width="5.9" height="1.6" rx="0" fill="#c0c8d0" />
<rect x="298.1" y="205" width="1.7" height="7.5" rx="0" fill="#c0c8d0" />
<path d="M309 221.7 L294 221.7 Q291.2 221.7 291.2 224.5 L291.2 257.9 Q291.2 260.7 294 260.7 L309 260.7" fill="#4f575f" stroke="#3c434a" stroke-width="1"/>
<path d="M295.6 236.4 L301.8 230.2" stroke="#1c2024" stroke-width="1.5" stroke-linecap="round"/>
<path d="M305.5 228.5 A2.2 2.2 0 1 1 303.5 226.5" fill="none" stroke="#1c2024" stroke-width="1.7"/>
<rect x="291.5" y="241" width="17.5" height="1" rx="0" fill="#3c434a" />
<text x="300.2" y="255.2" font-size="9.6" fill="#1c2024" text-anchor="middle" font-weight="bold" textLength="10.5" lengthAdjust="spacingAndGlyphs" >EQ</text>
<rect x="275.9" y="262.3" width="10.1" height="20" rx="1" fill="#0e1012" />
<rect x="274.9" y="261.3" width="10.1" height="20.2" rx="0.8" fill="#2a2c2e" />
<rect x="274.9" y="261.3" width="10.1" height="4.2" rx="0.8" fill="#f4f6f8" />
<rect x="274.9" y="266.2" width="10.1" height="1.2" rx="0" fill="#f4f6f8" />
<rect x="274.9" y="268.1" width="10.1" height="1.8" rx="0" fill="#e4dcdc" />
<rect x="274.9" y="269.9" width="10.1" height="1.2" rx="0" fill="#1c80b0" />
<rect x="274.9" y="271.1" width="10.1" height="1.4" rx="0" fill="#48b4e0" />
<rect x="274.9" y="272.5" width="10.1" height="2" rx="0" fill="#e4dcdc" />
<rect x="274.9" y="275.2" width="10.1" height="1.2" rx="0" fill="#f4f6f8" />
<rect x="274.9" y="277.1" width="10.1" height="4.4" rx="0.8" fill="#f4f6f8" />
<rect x="255.4" y="285.9" width="28.2" height="13.8" rx="6.9" fill="#454c53" stroke="#3e454b" stroke-width="0.8"/>
<text x="269.5" y="295.8" font-size="9.4" fill="#e8c83a" text-anchor="middle" font-weight="normal" letter-spacing="0.4">-oo</text>
<path d="M309 285.9 L296.4 285.9 A6.9 6.9 0 0 0 296.4 299.7 L309 299.7" fill="#454c53" stroke="#363c42" stroke-width="1"/>
<path d="M309 287.2 L304 287.2 A5.6 5.6 0 0 0 304 298.4 L309 298.4" fill="#596168" stroke="#3a4046" stroke-width="1"/>
<path d="M301.9 292.3 L305.9 288.7 L305.9 295.9 Z" fill="#c4ccd4"/>
<rect x="251" y="304" width="58" height="1" rx="0" fill="#2a3036" />
<rect x="251" y="305" width="58" height="12" rx="0" fill="#3f454c" />
<text x="280.8" y="313.8" font-size="9.2" fill="#dce0e4" text-anchor="middle" font-weight="normal" style="white-space:pre" letter-spacing="0.75" stroke="#dce0e4" stroke-width="0.25">ADAT  7/8</text>
<path d="M311 317 L311 62 Q311 58 315 58 L365 58 Q369 58 369 62 L369 317 Z" fill="url(#panelA)"/>
<text x="340.2" y="69.2" font-size="9.5" fill="#ffffff" text-anchor="middle" font-weight="normal" style="white-space:pre" stroke="#ffffff" stroke-width="0.3">ADAT  7/8</text>
<path d="M337.57 77.42 Q341.83 80.5 346 80.5 L361.5 80.5 Q365 80.5 365 84 L365 92.3 Q365 95.8 361.5 95.8 L346 95.8 Q341.83 95.8 337.57 97.78 Z" fill="#2a2f34"/>
<rect x="341" y="88.2" width="23.5" height="7.1" rx="0" fill="#1f2428" />
<circle cx="328.4" cy="87.6" r="13.7" fill="#2a2f34" />
<circle cx="328.7" cy="87.9" r="12" fill="url(#knobG)" />
<rect x="327.6" y="77" width="1.9" height="11.6" rx="0" fill="#e0b838" />
<rect x="329.5" y="77" width="1.7" height="11.6" rx="0" fill="#0c0c0c" />
<text x="353.8" y="92.4" font-size="10.6" fill="#e8c840" text-anchor="middle" font-weight="normal" textLength="5" lengthAdjust="spacingAndGlyphs" >0</text>
<rect x="316.6" y="107.2" width="47.3" height="17.3" rx="8.6" fill="url(#msG)" stroke="#a9b1b8" stroke-width="1.3"/>
<rect x="339.5" y="108" width="1" height="16" rx="0" fill="#30363c" />
<text x="328" y="119.6" font-size="10" fill="#d0d4d8" text-anchor="middle" font-weight="normal" >M</text>
<text x="352" y="119.6" font-size="10" fill="#d0d4d8" text-anchor="middle" font-weight="normal" >S</text>
<rect x="316" y="129.7" width="48.5" height="13.3" rx="6.5" fill="#4e565e" />
<text x="340" y="138.6" font-size="9.2" fill="#b9c1c9" text-anchor="middle" font-weight="normal" style="white-space:pre">UFL  UFL</text>
<rect x="315.8" y="145.8" width="13.9" height="135.6" rx="2.5" fill="#0e1114" />
<rect x="316.8" y="146.8" width="11.9" height="133.6" rx="1.5" fill="#1f262c" />
<rect x="318.8" y="148.3" width="8" height="12" rx="0" fill="#3d2b2c" />
<text x="322.9" y="179.6" font-size="9" fill="#a8b8c8" text-anchor="middle" font-weight="normal" textLength="3.8" lengthAdjust="spacingAndGlyphs" >0</text>
<rect x="319" y="176.3" width="1" height="1" rx="0" fill="#8a9aa8" />
<rect x="325.8" y="176.3" width="1" height="1" rx="0" fill="#8a9aa8" />
<rect x="321" y="187" width="3.8" height="1" rx="0" fill="#8e9cab" />
<rect x="321" y="197" width="3.8" height="1" rx="0" fill="#8e9cab" />
<rect x="321" y="206" width="3.8" height="1" rx="0" fill="#8e9cab" />
<rect x="321" y="212" width="3.8" height="1" rx="0" fill="#8e9cab" />
<rect x="321" y="218" width="3.8" height="1" rx="0" fill="#8e9cab" />
<rect x="321" y="223" width="3.8" height="1" rx="0" fill="#8e9cab" />
<rect x="321" y="231" width="3.8" height="1" rx="0" fill="#8e9cab" />
<rect x="321" y="239" width="3.8" height="1" rx="0" fill="#8e9cab" />
<rect x="321" y="249" width="3.8" height="1" rx="0" fill="#8e9cab" />
<rect x="321" y="258" width="3.8" height="1" rx="0" fill="#8e9cab" />
<rect x="321" y="266" width="3.8" height="1" rx="0" fill="#8e9cab" />
<rect x="321" y="272" width="3.8" height="1" rx="0" fill="#8e9cab" />
<rect x="334.7" y="147" width="10.8" height="134.5" rx="3" fill="#484d53" />
<rect x="338.7" y="151.7" width="3.6" height="126.3" rx="1.8" fill="#33404b" />
<rect x="332.5" y="177" width="1.7" height="1" rx="0" fill="#8a96a2" />
<rect x="347.5" y="177" width="1.7" height="1" rx="0" fill="#8a96a2" />
<rect x="354.8" y="146.3" width="7.2" height="49.7" rx="3.6" fill="#4a545c" />
<rect x="355.8" y="147.3" width="5.2" height="47.7" rx="2.6" fill="#56606a" />
<rect x="353.6" y="182.6" width="10.2" height="14.8" rx="5" fill="url(#trimG)" stroke="#30363c" stroke-width="0.8"/>
<rect x="353.8" y="189.3" width="9.8" height="1.3" rx="0" fill="#d0a030" />
<rect x="353.8" y="190.6" width="9.8" height="0.8" rx="0" fill="#e8d898" />
<circle cx="358.9" cy="208.6" r="6.4" fill="#59616a" stroke="#363c42" stroke-width="1.8"/>
<rect x="356" y="205" width="5.9" height="1.6" rx="0" fill="#c0c8d0" />
<rect x="358.1" y="205" width="1.7" height="7.5" rx="0" fill="#c0c8d0" />
<path d="M369 221.7 L354 221.7 Q351.2 221.7 351.2 224.5 L351.2 257.9 Q351.2 260.7 354 260.7 L369 260.7" fill="#4f575f" stroke="#3c434a" stroke-width="1"/>
<path d="M355.6 236.4 L361.8 230.2" stroke="#1c2024" stroke-width="1.5" stroke-linecap="round"/>
<path d="M365.5 228.5 A2.2 2.2 0 1 1 363.5 226.5" fill="none" stroke="#1c2024" stroke-width="1.7"/>
<rect x="351.5" y="241" width="17.5" height="1" rx="0" fill="#3c434a" />
<text x="360.2" y="255.2" font-size="9.6" fill="#1c2024" text-anchor="middle" font-weight="bold" textLength="10.5" lengthAdjust="spacingAndGlyphs" >EQ</text>
<rect x="335.9" y="262.3" width="10.1" height="20" rx="1" fill="#0e1012" />
<rect x="334.9" y="261.3" width="10.1" height="20.2" rx="0.8" fill="#2a2c2e" />
<rect x="334.9" y="261.3" width="10.1" height="4.2" rx="0.8" fill="#f4f6f8" />
<rect x="334.9" y="266.2" width="10.1" height="1.2" rx="0" fill="#f4f6f8" />
<rect x="334.9" y="268.1" width="10.1" height="1.8" rx="0" fill="#e4dcdc" />
<rect x="334.9" y="269.9" width="10.1" height="1.2" rx="0" fill="#1c80b0" />
<rect x="334.9" y="271.1" width="10.1" height="1.4" rx="0" fill="#48b4e0" />
<rect x="334.9" y="272.5" width="10.1" height="2" rx="0" fill="#e4dcdc" />
<rect x="334.9" y="275.2" width="10.1" height="1.2" rx="0" fill="#f4f6f8" />
<rect x="334.9" y="277.1" width="10.1" height="4.4" rx="0.8" fill="#f4f6f8" />
<rect x="315.4" y="285.9" width="28.2" height="13.8" rx="6.9" fill="#454c53" stroke="#3e454b" stroke-width="0.8"/>
<text x="329.5" y="295.8" font-size="9.4" fill="#e8c83a" text-anchor="middle" font-weight="normal" letter-spacing="0.4">-oo</text>
<path d="M369 285.9 L356.4 285.9 A6.9 6.9 0 0 0 356.4 299.7 L369 299.7" fill="#454c53" stroke="#363c42" stroke-width="1"/>
<path d="M369 287.2 L364 287.2 A5.6 5.6 0 0 0 364 298.4 L369 298.4" fill="#596168" stroke="#3a4046" stroke-width="1"/>
<path d="M361.9 292.3 L365.9 288.7 L365.9 295.9 Z" fill="#c4ccd4"/>
<rect x="311" y="304" width="58" height="1" rx="0" fill="#2a3036" />
<rect x="311" y="305" width="58" height="12" rx="0" fill="#3f454c" />
<text x="340.8" y="313.8" font-size="9.2" fill="#dce0e4" text-anchor="middle" font-weight="normal" style="white-space:pre" letter-spacing="0.75" stroke="#dce0e4" stroke-width="0.25">ADAT  7/8</text>
<rect x="10" y="318" width="359" height="13" rx="0" fill="url(#barG)" />
<rect x="10" y="318" width="359" height="0.8" rx="0" fill="#2a2f34" />
<text x="22.6" y="328.8" font-size="11" fill="#a9b4be" text-anchor="start" font-weight="bold" textLength="65.5" lengthAdjust="spacingAndGlyphs" >HARDWARE INPUTS</text>
<rect x="103.5" y="319" width="260" height="10" rx="5" fill="#2a2f34" />
<rect x="105.5" y="320" width="256" height="8" rx="4" fill="url(#scrG)" />
<rect x="6" y="323.8" width="11" height="2" rx="0" fill="#c0392b" />
<rect x="366" y="324" width="3" height="2" rx="0" fill="#c0392b" />
<rect x="11" y="332" width="358" height="274" rx="0" fill="#30363c" />
<rect x="6" y="332" width="4" height="274" rx="0" fill="#3aa6c0" />
<path d="M11 592 L11 337 Q11 333 15 333 L65 333 Q69 333 69 337 L69 592 Z" fill="url(#panelA)"/>
<text x="40.2" y="344.2" font-size="9.5" fill="#ffffff" text-anchor="middle" font-weight="normal" style="white-space:pre" stroke="#ffffff" stroke-width="0.3">AN  1/2</text>
<path d="M37.57 352.42 Q41.83 355.5 46 355.5 L61.5 355.5 Q65 355.5 65 359 L65 367.3 Q65 370.8 61.5 370.8 L46 370.8 Q41.83 370.8 37.57 372.78 Z" fill="#2a2f34"/>
<rect x="41" y="363.2" width="23.5" height="7.1" rx="0" fill="#1f2428" />
<circle cx="28.4" cy="362.6" r="13.7" fill="#2a2f34" />
<circle cx="28.7" cy="362.9" r="12" fill="url(#knobG)" />
<rect x="27.6" y="352" width="1.9" height="11.6" rx="0" fill="#e0b838" />
<rect x="29.5" y="352" width="1.7" height="11.6" rx="0" fill="#0c0c0c" />
<text x="53.8" y="367.4" font-size="10.6" fill="#e8c840" text-anchor="middle" font-weight="normal" textLength="5" lengthAdjust="spacingAndGlyphs" >0</text>
<rect x="16.6" y="382.2" width="47.3" height="17.3" rx="8.6" fill="url(#msG)" stroke="#a9b1b8" stroke-width="1.3"/>
<rect x="39.5" y="383" width="1" height="16" rx="0" fill="#30363c" />
<text x="28" y="394.6" font-size="10" fill="#d0d4d8" text-anchor="middle" font-weight="normal" >M</text>
<text x="52" y="394.6" font-size="10" fill="#d0d4d8" text-anchor="middle" font-weight="normal" >S</text>
<rect x="16" y="404.7" width="48.5" height="13.3" rx="6.5" fill="#4e565e" />
<text x="40" y="413.6" font-size="9.2" fill="#b9c1c9" text-anchor="middle" font-weight="normal" style="white-space:pre">UFL  UFL</text>
<rect x="15.8" y="420.8" width="13.9" height="135.6" rx="2.5" fill="#0e1114" />
<rect x="16.8" y="421.8" width="11.9" height="133.6" rx="1.5" fill="#1f262c" />
<rect x="18.8" y="423.3" width="8" height="12" rx="0" fill="#3d2b2c" />
<text x="22.9" y="454.6" font-size="9" fill="#a8b8c8" text-anchor="middle" font-weight="normal" textLength="3.8" lengthAdjust="spacingAndGlyphs" >0</text>
<rect x="19" y="451.3" width="1" height="1" rx="0" fill="#8a9aa8" />
<rect x="25.8" y="451.3" width="1" height="1" rx="0" fill="#8a9aa8" />
<rect x="21" y="462" width="3.8" height="1" rx="0" fill="#8e9cab" />
<rect x="21" y="472" width="3.8" height="1" rx="0" fill="#8e9cab" />
<rect x="21" y="481" width="3.8" height="1" rx="0" fill="#8e9cab" />
<rect x="21" y="487" width="3.8" height="1" rx="0" fill="#8e9cab" />
<rect x="21" y="493" width="3.8" height="1" rx="0" fill="#8e9cab" />
<rect x="21" y="498" width="3.8" height="1" rx="0" fill="#8e9cab" />
<rect x="21" y="506" width="3.8" height="1" rx="0" fill="#8e9cab" />
<rect x="21" y="514" width="3.8" height="1" rx="0" fill="#8e9cab" />
<rect x="21" y="524" width="3.8" height="1" rx="0" fill="#8e9cab" />
<rect x="21" y="533" width="3.8" height="1" rx="0" fill="#8e9cab" />
<rect x="21" y="541" width="3.8" height="1" rx="0" fill="#8e9cab" />
<rect x="21" y="547" width="3.8" height="1" rx="0" fill="#8e9cab" />
<rect x="34.7" y="422" width="10.8" height="134.5" rx="3" fill="#484d53" />
<rect x="38.7" y="426.7" width="3.6" height="126.3" rx="1.8" fill="#33404b" />
<rect x="32.5" y="452" width="1.7" height="1" rx="0" fill="#8a96a2" />
<rect x="47.5" y="452" width="1.7" height="1" rx="0" fill="#8a96a2" />
<rect x="54.8" y="421.3" width="7.2" height="49.7" rx="3.6" fill="#4a545c" />
<rect x="55.8" y="422.3" width="5.2" height="47.7" rx="2.6" fill="#56606a" />
<rect x="53.6" y="457.6" width="10.2" height="14.8" rx="5" fill="url(#trimG)" stroke="#30363c" stroke-width="0.8"/>
<rect x="53.8" y="464.3" width="9.8" height="1.3" rx="0" fill="#d0a030" />
<rect x="53.8" y="465.6" width="9.8" height="0.8" rx="0" fill="#e8d898" />
<circle cx="58.9" cy="483.6" r="6.4" fill="#59616a" stroke="#363c42" stroke-width="1.8"/>
<rect x="56" y="480" width="5.9" height="1.6" rx="0" fill="#c0c8d0" />
<rect x="58.1" y="480" width="1.7" height="7.5" rx="0" fill="#c0c8d0" />
<path d="M69 496.7 L54 496.7 Q51.2 496.7 51.2 499.5 L51.2 513.7 Q51.2 516.5 54 516.5 L69 516.5" fill="#4f575f" stroke="#3c434a" stroke-width="1"/>
<path d="M55.6 511.4 L61.8 505.2" stroke="#1c2024" stroke-width="1.5" stroke-linecap="round"/>
<path d="M65.5 503.5 A2.2 2.2 0 1 1 63.5 501.5" fill="none" stroke="#1c2024" stroke-width="1.7"/>
<rect x="35.9" y="537.3" width="10.1" height="20" rx="1" fill="#0e1012" />
<rect x="34.9" y="536.3" width="10.1" height="20.2" rx="0.8" fill="#2a2c2e" />
<rect x="34.9" y="536.3" width="10.1" height="4.2" rx="0.8" fill="#f4f6f8" />
<rect x="34.9" y="541.2" width="10.1" height="1.2" rx="0" fill="#f4f6f8" />
<rect x="34.9" y="543.1" width="10.1" height="1.8" rx="0" fill="#e4dcdc" />
<rect x="34.9" y="544.9" width="10.1" height="1.2" rx="0" fill="#1c80b0" />
<rect x="34.9" y="546.1" width="10.1" height="1.4" rx="0" fill="#48b4e0" />
<rect x="34.9" y="547.5" width="10.1" height="2" rx="0" fill="#e4dcdc" />
<rect x="34.9" y="550.2" width="10.1" height="1.2" rx="0" fill="#f4f6f8" />
<rect x="34.9" y="552.1" width="10.1" height="4.4" rx="0.8" fill="#f4f6f8" />
<rect x="15.4" y="560.9" width="28.2" height="13.8" rx="6.9" fill="#454c53" stroke="#3e454b" stroke-width="0.8"/>
<text x="29.5" y="570.8" font-size="9.4" fill="#e8c83a" text-anchor="middle" font-weight="normal" letter-spacing="0.4">-oo</text>
<path d="M69 560.9 L56.4 560.9 A6.9 6.9 0 0 0 56.4 574.7 L69 574.7" fill="#454c53" stroke="#363c42" stroke-width="1"/>
<path d="M69 562.2 L64 562.2 A5.6 5.6 0 0 0 64 573.4 L69 573.4" fill="#596168" stroke="#3a4046" stroke-width="1"/>
<path d="M61.9 567.3 L65.9 563.7 L65.9 570.9 Z" fill="#c4ccd4"/>
<rect x="11" y="579" width="58" height="1" rx="0" fill="#2a3036" />
<rect x="11" y="580" width="58" height="12" rx="0" fill="#3f454c" />
<text x="40.8" y="588.8" font-size="9.2" fill="#dce0e4" text-anchor="middle" font-weight="normal" style="white-space:pre" letter-spacing="0.75" stroke="#dce0e4" stroke-width="0.25">ADAT  7/8</text>
<path d="M71 592 L71 337 Q71 333 75 333 L125 333 Q129 333 129 337 L129 592 Z" fill="url(#panelA)"/>
<text x="100.2" y="344.2" font-size="9.5" fill="#ffffff" text-anchor="middle" font-weight="normal" style="white-space:pre" stroke="#ffffff" stroke-width="0.3">PH  3/4</text>
<path d="M97.57 352.42 Q101.83 355.5 106 355.5 L121.5 355.5 Q125 355.5 125 359 L125 367.3 Q125 370.8 121.5 370.8 L106 370.8 Q101.83 370.8 97.57 372.78 Z" fill="#2a2f34"/>
<rect x="101" y="363.2" width="23.5" height="7.1" rx="0" fill="#1f2428" />
<circle cx="88.4" cy="362.6" r="13.7" fill="#2a2f34" />
<circle cx="88.7" cy="362.9" r="12" fill="url(#knobG)" />
<rect x="87.6" y="352" width="1.9" height="11.6" rx="0" fill="#e0b838" />
<rect x="89.5" y="352" width="1.7" height="11.6" rx="0" fill="#0c0c0c" />
<text x="113.8" y="367.4" font-size="10.6" fill="#e8c840" text-anchor="middle" font-weight="normal" textLength="5" lengthAdjust="spacingAndGlyphs" >0</text>
<rect x="76.6" y="382.2" width="47.3" height="17.3" rx="8.6" fill="url(#msG)" stroke="#a9b1b8" stroke-width="1.3"/>
<rect x="99.5" y="383" width="1" height="16" rx="0" fill="#30363c" />
<text x="88" y="394.6" font-size="10" fill="#d0d4d8" text-anchor="middle" font-weight="normal" >M</text>
<text x="112" y="394.6" font-size="10" fill="#d0d4d8" text-anchor="middle" font-weight="normal" >S</text>
<rect x="76" y="404.7" width="48.5" height="13.3" rx="6.5" fill="#4e565e" />
<text x="100" y="413.6" font-size="9.2" fill="#b9c1c9" text-anchor="middle" font-weight="normal" style="white-space:pre">-20.2 -24.8</text>
<rect x="75.8" y="420.8" width="13.9" height="135.6" rx="2.5" fill="#0e1114" />
<rect x="76.8" y="421.8" width="11.9" height="133.6" rx="1.5" fill="#1f262c" />
<rect x="78.8" y="423.3" width="8" height="12" rx="0" fill="#3d2b2c" />
<rect x="78.9" y="514.5" width="3.1" height="40.4" rx="0" fill="#7ee000" />
<rect x="83.8" y="514.5" width="3.1" height="40.4" rx="0" fill="#7ee000" />
<rect x="82" y="514.5" width="1.8" height="40.4" rx="0" fill="#3e8a00" />
<rect x="78.9" y="502.9" width="4.1" height="2" rx="0" fill="#a8e020" />
<rect x="83.8" y="503.9" width="3.2" height="2" rx="0" fill="#a8e020" />
<text x="82.9" y="454.6" font-size="9" fill="#a8b8c8" text-anchor="middle" font-weight="normal" textLength="3.8" lengthAdjust="spacingAndGlyphs" >0</text>
<rect x="79" y="451.3" width="1" height="1" rx="0" fill="#8a9aa8" />
<rect x="85.8" y="451.3" width="1" height="1" rx="0" fill="#8a9aa8" />
<rect x="81" y="462" width="3.8" height="1" rx="0" fill="#8e9cab" />
<rect x="81" y="472" width="3.8" height="1" rx="0" fill="#8e9cab" />
<rect x="81" y="481" width="3.8" height="1" rx="0" fill="#8e9cab" />
<rect x="81" y="487" width="3.8" height="1" rx="0" fill="#8e9cab" />
<rect x="81" y="493" width="3.8" height="1" rx="0" fill="#8e9cab" />
<rect x="81" y="498" width="3.8" height="1" rx="0" fill="#8e9cab" />
<rect x="81" y="506" width="3.8" height="1" rx="0" fill="#8e9cab" />
<rect x="81" y="514" width="3.8" height="1" rx="0" fill="#8e9cab" />
<rect x="81" y="524" width="3.8" height="1" rx="0" fill="#8e9cab" />
<rect x="81" y="533" width="3.8" height="1" rx="0" fill="#8e9cab" />
<rect x="81" y="541" width="3.8" height="1" rx="0" fill="#8e9cab" />
<rect x="81" y="547" width="3.8" height="1" rx="0" fill="#8e9cab" />
<rect x="94.7" y="422" width="10.8" height="134.5" rx="3" fill="#484d53" />
<rect x="98.7" y="426.7" width="3.6" height="126.3" rx="1.8" fill="#33404b" />
<rect x="92.5" y="452" width="1.7" height="1" rx="0" fill="#8a96a2" />
<rect x="107.5" y="452" width="1.7" height="1" rx="0" fill="#8a96a2" />
<rect x="114.8" y="421.3" width="7.2" height="49.7" rx="3.6" fill="#4a545c" />
<rect x="115.8" y="422.3" width="5.2" height="47.7" rx="2.6" fill="#56606a" />
<rect x="113.6" y="457.6" width="10.2" height="14.8" rx="5" fill="url(#trimG)" stroke="#30363c" stroke-width="0.8"/>
<rect x="113.8" y="464.3" width="9.8" height="1.3" rx="0" fill="#d0a030" />
<rect x="113.8" y="465.6" width="9.8" height="0.8" rx="0" fill="#e8d898" />
<circle cx="118.9" cy="483.6" r="6.4" fill="#59616a" stroke="#363c42" stroke-width="1.8"/>
<rect x="116" y="480" width="5.9" height="1.6" rx="0" fill="#c0c8d0" />
<rect x="118.1" y="480" width="1.7" height="7.5" rx="0" fill="#c0c8d0" />
<path d="M129 496.7 L114 496.7 Q111.2 496.7 111.2 499.5 L111.2 513.7 Q111.2 516.5 114 516.5 L129 516.5" fill="#4f575f" stroke="#3c434a" stroke-width="1"/>
<path d="M115.6 511.4 L121.8 505.2" stroke="#1c2024" stroke-width="1.5" stroke-linecap="round"/>
<path d="M125.5 503.5 A2.2 2.2 0 1 1 123.5 501.5" fill="none" stroke="#1c2024" stroke-width="1.7"/>
<rect x="95.9" y="537.3" width="10.1" height="20" rx="1" fill="#0e1012" />
<rect x="94.9" y="536.3" width="10.1" height="20.2" rx="0.8" fill="#2a2c2e" />
<rect x="94.9" y="536.3" width="10.1" height="4.2" rx="0.8" fill="#f4f6f8" />
<rect x="94.9" y="541.2" width="10.1" height="1.2" rx="0" fill="#f4f6f8" />
<rect x="94.9" y="543.1" width="10.1" height="1.8" rx="0" fill="#e4dcdc" />
<rect x="94.9" y="544.9" width="10.1" height="1.2" rx="0" fill="#1c80b0" />
<rect x="94.9" y="546.1" width="10.1" height="1.4" rx="0" fill="#48b4e0" />
<rect x="94.9" y="547.5" width="10.1" height="2" rx="0" fill="#e4dcdc" />
<rect x="94.9" y="550.2" width="10.1" height="1.2" rx="0" fill="#f4f6f8" />
<rect x="94.9" y="552.1" width="10.1" height="4.4" rx="0.8" fill="#f4f6f8" />
<rect x="75.4" y="560.9" width="28.2" height="13.8" rx="6.9" fill="#454c53" stroke="#3e454b" stroke-width="0.8"/>
<text x="89.5" y="570.8" font-size="9.4" fill="#e8c83a" text-anchor="middle" font-weight="normal" letter-spacing="0.4">-oo</text>
<path d="M129 560.9 L116.4 560.9 A6.9 6.9 0 0 0 116.4 574.7 L129 574.7" fill="#454c53" stroke="#363c42" stroke-width="1"/>
<path d="M129 562.2 L124 562.2 A5.6 5.6 0 0 0 124 573.4 L129 573.4" fill="#596168" stroke="#3a4046" stroke-width="1"/>
<path d="M121.9 567.3 L125.9 563.7 L125.9 570.9 Z" fill="#c4ccd4"/>
<rect x="71" y="579" width="58" height="1" rx="0" fill="#2a3036" />
<rect x="71" y="580" width="58" height="12" rx="0" fill="#3f454c" />
<text x="100.8" y="588.8" font-size="9.2" fill="#dce0e4" text-anchor="middle" font-weight="normal" style="white-space:pre" letter-spacing="0.75" stroke="#dce0e4" stroke-width="0.25">ADAT  7/8</text>
<path d="M131 592 L131 337 Q131 333 135 333 L185 333 Q189 333 189 337 L189 592 Z" fill="url(#panelA)"/>
<text x="160.2" y="344.2" font-size="9.5" fill="#ffffff" text-anchor="middle" font-weight="normal" style="white-space:pre" stroke="#ffffff" stroke-width="0.3">AS  1/2</text>
<path d="M157.57 352.42 Q161.83 355.5 166 355.5 L181.5 355.5 Q185 355.5 185 359 L185 367.3 Q185 370.8 181.5 370.8 L166 370.8 Q161.83 370.8 157.57 372.78 Z" fill="#2a2f34"/>
<rect x="161" y="363.2" width="23.5" height="7.1" rx="0" fill="#1f2428" />
<circle cx="148.4" cy="362.6" r="13.7" fill="#2a2f34" />
<circle cx="148.7" cy="362.9" r="12" fill="url(#knobG)" />
<rect x="147.6" y="352" width="1.9" height="11.6" rx="0" fill="#e0b838" />
<rect x="149.5" y="352" width="1.7" height="11.6" rx="0" fill="#0c0c0c" />
<text x="173.8" y="367.4" font-size="10.6" fill="#e8c840" text-anchor="middle" font-weight="normal" textLength="5" lengthAdjust="spacingAndGlyphs" >0</text>
<rect x="136.6" y="382.2" width="47.3" height="17.3" rx="8.6" fill="url(#msG)" stroke="#a9b1b8" stroke-width="1.3"/>
<rect x="159.5" y="383" width="1" height="16" rx="0" fill="#30363c" />
<text x="148" y="394.6" font-size="10" fill="#d0d4d8" text-anchor="middle" font-weight="normal" >M</text>
<text x="172" y="394.6" font-size="10" fill="#d0d4d8" text-anchor="middle" font-weight="normal" >S</text>
<rect x="136" y="404.7" width="48.5" height="13.3" rx="6.5" fill="#4e565e" />
<text x="160" y="413.6" font-size="9.2" fill="#b9c1c9" text-anchor="middle" font-weight="normal" style="white-space:pre">UFL  UFL</text>
<rect x="135.8" y="420.8" width="13.9" height="135.6" rx="2.5" fill="#0e1114" />
<rect x="136.8" y="421.8" width="11.9" height="133.6" rx="1.5" fill="#1f262c" />
<rect x="138.8" y="423.3" width="8" height="12" rx="0" fill="#3d2b2c" />
<text x="142.9" y="454.6" font-size="9" fill="#a8b8c8" text-anchor="middle" font-weight="normal" textLength="3.8" lengthAdjust="spacingAndGlyphs" >0</text>
<rect x="139" y="451.3" width="1" height="1" rx="0" fill="#8a9aa8" />
<rect x="145.8" y="451.3" width="1" height="1" rx="0" fill="#8a9aa8" />
<rect x="141" y="462" width="3.8" height="1" rx="0" fill="#8e9cab" />
<rect x="141" y="472" width="3.8" height="1" rx="0" fill="#8e9cab" />
<rect x="141" y="481" width="3.8" height="1" rx="0" fill="#8e9cab" />
<rect x="141" y="487" width="3.8" height="1" rx="0" fill="#8e9cab" />
<rect x="141" y="493" width="3.8" height="1" rx="0" fill="#8e9cab" />
<rect x="141" y="498" width="3.8" height="1" rx="0" fill="#8e9cab" />
<rect x="141" y="506" width="3.8" height="1" rx="0" fill="#8e9cab" />
<rect x="141" y="514" width="3.8" height="1" rx="0" fill="#8e9cab" />
<rect x="141" y="524" width="3.8" height="1" rx="0" fill="#8e9cab" />
<rect x="141" y="533" width="3.8" height="1" rx="0" fill="#8e9cab" />
<rect x="141" y="541" width="3.8" height="1" rx="0" fill="#8e9cab" />
<rect x="141" y="547" width="3.8" height="1" rx="0" fill="#8e9cab" />
<rect x="154.7" y="422" width="10.8" height="134.5" rx="3" fill="#484d53" />
<rect x="158.7" y="426.7" width="3.6" height="126.3" rx="1.8" fill="#33404b" />
<rect x="152.5" y="452" width="1.7" height="1" rx="0" fill="#8a96a2" />
<rect x="167.5" y="452" width="1.7" height="1" rx="0" fill="#8a96a2" />
<rect x="174.8" y="421.3" width="7.2" height="49.7" rx="3.6" fill="#4a545c" />
<rect x="175.8" y="422.3" width="5.2" height="47.7" rx="2.6" fill="#56606a" />
<rect x="173.6" y="457.6" width="10.2" height="14.8" rx="5" fill="url(#trimG)" stroke="#30363c" stroke-width="0.8"/>
<rect x="173.8" y="464.3" width="9.8" height="1.3" rx="0" fill="#d0a030" />
<rect x="173.8" y="465.6" width="9.8" height="0.8" rx="0" fill="#e8d898" />
<circle cx="178.9" cy="483.6" r="6.4" fill="#59616a" stroke="#363c42" stroke-width="1.8"/>
<rect x="176" y="480" width="5.9" height="1.6" rx="0" fill="#c0c8d0" />
<rect x="178.1" y="480" width="1.7" height="7.5" rx="0" fill="#c0c8d0" />
<path d="M189 496.7 L174 496.7 Q171.2 496.7 171.2 499.5 L171.2 513.7 Q171.2 516.5 174 516.5 L189 516.5" fill="#4f575f" stroke="#3c434a" stroke-width="1"/>
<path d="M175.6 511.4 L181.8 505.2" stroke="#1c2024" stroke-width="1.5" stroke-linecap="round"/>
<path d="M185.5 503.5 A2.2 2.2 0 1 1 183.5 501.5" fill="none" stroke="#1c2024" stroke-width="1.7"/>
<rect x="155.9" y="537.3" width="10.1" height="20" rx="1" fill="#0e1012" />
<rect x="154.9" y="536.3" width="10.1" height="20.2" rx="0.8" fill="#2a2c2e" />
<rect x="154.9" y="536.3" width="10.1" height="4.2" rx="0.8" fill="#f4f6f8" />
<rect x="154.9" y="541.2" width="10.1" height="1.2" rx="0" fill="#f4f6f8" />
<rect x="154.9" y="543.1" width="10.1" height="1.8" rx="0" fill="#e4dcdc" />
<rect x="154.9" y="544.9" width="10.1" height="1.2" rx="0" fill="#1c80b0" />
<rect x="154.9" y="546.1" width="10.1" height="1.4" rx="0" fill="#48b4e0" />
<rect x="154.9" y="547.5" width="10.1" height="2" rx="0" fill="#e4dcdc" />
<rect x="154.9" y="550.2" width="10.1" height="1.2" rx="0" fill="#f4f6f8" />
<rect x="154.9" y="552.1" width="10.1" height="4.4" rx="0.8" fill="#f4f6f8" />
<rect x="135.4" y="560.9" width="28.2" height="13.8" rx="6.9" fill="#454c53" stroke="#3e454b" stroke-width="0.8"/>
<text x="149.5" y="570.8" font-size="9.4" fill="#e8c83a" text-anchor="middle" font-weight="normal" letter-spacing="0.4">-oo</text>
<path d="M189 560.9 L176.4 560.9 A6.9 6.9 0 0 0 176.4 574.7 L189 574.7" fill="#454c53" stroke="#363c42" stroke-width="1"/>
<path d="M189 562.2 L184 562.2 A5.6 5.6 0 0 0 184 573.4 L189 573.4" fill="#596168" stroke="#3a4046" stroke-width="1"/>
<path d="M181.9 567.3 L185.9 563.7 L185.9 570.9 Z" fill="#c4ccd4"/>
<rect x="131" y="579" width="58" height="1" rx="0" fill="#2a3036" />
<rect x="131" y="580" width="58" height="12" rx="0" fill="#3f454c" />
<text x="160.8" y="588.8" font-size="9.2" fill="#dce0e4" text-anchor="middle" font-weight="normal" style="white-space:pre" letter-spacing="0.75" stroke="#dce0e4" stroke-width="0.25">ADAT  7/8</text>
<path d="M191 592 L191 337 Q191 333 195 333 L245 333 Q249 333 249 337 L249 592 Z" fill="url(#panelA)"/>
<text x="220.2" y="344.2" font-size="9.5" fill="#ffffff" text-anchor="middle" font-weight="normal" style="white-space:pre" stroke="#ffffff" stroke-width="0.3">ADAT  3/4</text>
<path d="M217.57 352.42 Q221.83 355.5 226 355.5 L241.5 355.5 Q245 355.5 245 359 L245 367.3 Q245 370.8 241.5 370.8 L226 370.8 Q221.83 370.8 217.57 372.78 Z" fill="#2a2f34"/>
<rect x="221" y="363.2" width="23.5" height="7.1" rx="0" fill="#1f2428" />
<circle cx="208.4" cy="362.6" r="13.7" fill="#2a2f34" />
<circle cx="208.7" cy="362.9" r="12" fill="url(#knobG)" />
<rect x="207.6" y="352" width="1.9" height="11.6" rx="0" fill="#e0b838" />
<rect x="209.5" y="352" width="1.7" height="11.6" rx="0" fill="#0c0c0c" />
<text x="233.8" y="367.4" font-size="10.6" fill="#e8c840" text-anchor="middle" font-weight="normal" textLength="5" lengthAdjust="spacingAndGlyphs" >0</text>
<rect x="196.6" y="382.2" width="47.3" height="17.3" rx="8.6" fill="url(#msG)" stroke="#a9b1b8" stroke-width="1.3"/>
<rect x="219.5" y="383" width="1" height="16" rx="0" fill="#30363c" />
<text x="208" y="394.6" font-size="10" fill="#d0d4d8" text-anchor="middle" font-weight="normal" >M</text>
<text x="232" y="394.6" font-size="10" fill="#d0d4d8" text-anchor="middle" font-weight="normal" >S</text>
<rect x="196" y="404.7" width="48.5" height="13.3" rx="6.5" fill="#4e565e" />
<text x="220" y="413.6" font-size="9.2" fill="#b9c1c9" text-anchor="middle" font-weight="normal" style="white-space:pre">UFL  UFL</text>
<rect x="195.8" y="420.8" width="13.9" height="135.6" rx="2.5" fill="#0e1114" />
<rect x="196.8" y="421.8" width="11.9" height="133.6" rx="1.5" fill="#1f262c" />
<rect x="198.8" y="423.3" width="8" height="12" rx="0" fill="#3d2b2c" />
<text x="202.9" y="454.6" font-size="9" fill="#a8b8c8" text-anchor="middle" font-weight="normal" textLength="3.8" lengthAdjust="spacingAndGlyphs" >0</text>
<rect x="199" y="451.3" width="1" height="1" rx="0" fill="#8a9aa8" />
<rect x="205.8" y="451.3" width="1" height="1" rx="0" fill="#8a9aa8" />
<rect x="201" y="462" width="3.8" height="1" rx="0" fill="#8e9cab" />
<rect x="201" y="472" width="3.8" height="1" rx="0" fill="#8e9cab" />
<rect x="201" y="481" width="3.8" height="1" rx="0" fill="#8e9cab" />
<rect x="201" y="487" width="3.8" height="1" rx="0" fill="#8e9cab" />
<rect x="201" y="493" width="3.8" height="1" rx="0" fill="#8e9cab" />
<rect x="201" y="498" width="3.8" height="1" rx="0" fill="#8e9cab" />
<rect x="201" y="506" width="3.8" height="1" rx="0" fill="#8e9cab" />
<rect x="201" y="514" width="3.8" height="1" rx="0" fill="#8e9cab" />
<rect x="201" y="524" width="3.8" height="1" rx="0" fill="#8e9cab" />
<rect x="201" y="533" width="3.8" height="1" rx="0" fill="#8e9cab" />
<rect x="201" y="541" width="3.8" height="1" rx="0" fill="#8e9cab" />
<rect x="201" y="547" width="3.8" height="1" rx="0" fill="#8e9cab" />
<rect x="214.7" y="422" width="10.8" height="134.5" rx="3" fill="#484d53" />
<rect x="218.7" y="426.7" width="3.6" height="126.3" rx="1.8" fill="#33404b" />
<rect x="212.5" y="452" width="1.7" height="1" rx="0" fill="#8a96a2" />
<rect x="227.5" y="452" width="1.7" height="1" rx="0" fill="#8a96a2" />
<rect x="234.8" y="421.3" width="7.2" height="49.7" rx="3.6" fill="#4a545c" />
<rect x="235.8" y="422.3" width="5.2" height="47.7" rx="2.6" fill="#56606a" />
<rect x="233.6" y="457.6" width="10.2" height="14.8" rx="5" fill="url(#trimG)" stroke="#30363c" stroke-width="0.8"/>
<rect x="233.8" y="464.3" width="9.8" height="1.3" rx="0" fill="#d0a030" />
<rect x="233.8" y="465.6" width="9.8" height="0.8" rx="0" fill="#e8d898" />
<circle cx="238.9" cy="483.6" r="6.4" fill="#59616a" stroke="#363c42" stroke-width="1.8"/>
<rect x="236" y="480" width="5.9" height="1.6" rx="0" fill="#c0c8d0" />
<rect x="238.1" y="480" width="1.7" height="7.5" rx="0" fill="#c0c8d0" />
<path d="M249 496.7 L234 496.7 Q231.2 496.7 231.2 499.5 L231.2 513.7 Q231.2 516.5 234 516.5 L249 516.5" fill="#4f575f" stroke="#3c434a" stroke-width="1"/>
<path d="M235.6 511.4 L241.8 505.2" stroke="#1c2024" stroke-width="1.5" stroke-linecap="round"/>
<path d="M245.5 503.5 A2.2 2.2 0 1 1 243.5 501.5" fill="none" stroke="#1c2024" stroke-width="1.7"/>
<rect x="215.9" y="537.3" width="10.1" height="20" rx="1" fill="#0e1012" />
<rect x="214.9" y="536.3" width="10.1" height="20.2" rx="0.8" fill="#2a2c2e" />
<rect x="214.9" y="536.3" width="10.1" height="4.2" rx="0.8" fill="#f4f6f8" />
<rect x="214.9" y="541.2" width="10.1" height="1.2" rx="0" fill="#f4f6f8" />
<rect x="214.9" y="543.1" width="10.1" height="1.8" rx="0" fill="#e4dcdc" />
<rect x="214.9" y="544.9" width="10.1" height="1.2" rx="0" fill="#1c80b0" />
<rect x="214.9" y="546.1" width="10.1" height="1.4" rx="0" fill="#48b4e0" />
<rect x="214.9" y="547.5" width="10.1" height="2" rx="0" fill="#e4dcdc" />
<rect x="214.9" y="550.2" width="10.1" height="1.2" rx="0" fill="#f4f6f8" />
<rect x="214.9" y="552.1" width="10.1" height="4.4" rx="0.8" fill="#f4f6f8" />
<rect x="195.4" y="560.9" width="28.2" height="13.8" rx="6.9" fill="#454c53" stroke="#3e454b" stroke-width="0.8"/>
<text x="209.5" y="570.8" font-size="9.4" fill="#e8c83a" text-anchor="middle" font-weight="normal" letter-spacing="0.4">-oo</text>
<path d="M249 560.9 L236.4 560.9 A6.9 6.9 0 0 0 236.4 574.7 L249 574.7" fill="#454c53" stroke="#363c42" stroke-width="1"/>
<path d="M249 562.2 L244 562.2 A5.6 5.6 0 0 0 244 573.4 L249 573.4" fill="#596168" stroke="#3a4046" stroke-width="1"/>
<path d="M241.9 567.3 L245.9 563.7 L245.9 570.9 Z" fill="#c4ccd4"/>
<rect x="191" y="579" width="58" height="1" rx="0" fill="#2a3036" />
<rect x="191" y="580" width="58" height="12" rx="0" fill="#3f454c" />
<text x="220.8" y="588.8" font-size="9.2" fill="#dce0e4" text-anchor="middle" font-weight="normal" style="white-space:pre" letter-spacing="0.75" stroke="#dce0e4" stroke-width="0.25">ADAT  7/8</text>
<path d="M251 592 L251 337 Q251 333 255 333 L305 333 Q309 333 309 337 L309 592 Z" fill="url(#panelA)"/>
<text x="280.2" y="344.2" font-size="9.5" fill="#ffffff" text-anchor="middle" font-weight="normal" style="white-space:pre" stroke="#ffffff" stroke-width="0.3">ADAT  5/6</text>
<path d="M277.57 352.42 Q281.83 355.5 286 355.5 L301.5 355.5 Q305 355.5 305 359 L305 367.3 Q305 370.8 301.5 370.8 L286 370.8 Q281.83 370.8 277.57 372.78 Z" fill="#2a2f34"/>
<rect x="281" y="363.2" width="23.5" height="7.1" rx="0" fill="#1f2428" />
<circle cx="268.4" cy="362.6" r="13.7" fill="#2a2f34" />
<circle cx="268.7" cy="362.9" r="12" fill="url(#knobG)" />
<rect x="267.6" y="352" width="1.9" height="11.6" rx="0" fill="#e0b838" />
<rect x="269.5" y="352" width="1.7" height="11.6" rx="0" fill="#0c0c0c" />
<text x="293.8" y="367.4" font-size="10.6" fill="#e8c840" text-anchor="middle" font-weight="normal" textLength="5" lengthAdjust="spacingAndGlyphs" >0</text>
<rect x="256.6" y="382.2" width="47.3" height="17.3" rx="8.6" fill="url(#msG)" stroke="#a9b1b8" stroke-width="1.3"/>
<rect x="279.5" y="383" width="1" height="16" rx="0" fill="#30363c" />
<text x="268" y="394.6" font-size="10" fill="#d0d4d8" text-anchor="middle" font-weight="normal" >M</text>
<text x="292" y="394.6" font-size="10" fill="#d0d4d8" text-anchor="middle" font-weight="normal" >S</text>
<rect x="256" y="404.7" width="48.5" height="13.3" rx="6.5" fill="#4e565e" />
<text x="280" y="413.6" font-size="9.2" fill="#b9c1c9" text-anchor="middle" font-weight="normal" style="white-space:pre">UFL  UFL</text>
<rect x="255.8" y="420.8" width="13.9" height="135.6" rx="2.5" fill="#0e1114" />
<rect x="256.8" y="421.8" width="11.9" height="133.6" rx="1.5" fill="#1f262c" />
<rect x="258.8" y="423.3" width="8" height="12" rx="0" fill="#3d2b2c" />
<text x="262.9" y="454.6" font-size="9" fill="#a8b8c8" text-anchor="middle" font-weight="normal" textLength="3.8" lengthAdjust="spacingAndGlyphs" >0</text>
<rect x="259" y="451.3" width="1" height="1" rx="0" fill="#8a9aa8" />
<rect x="265.8" y="451.3" width="1" height="1" rx="0" fill="#8a9aa8" />
<rect x="261" y="462" width="3.8" height="1" rx="0" fill="#8e9cab" />
<rect x="261" y="472" width="3.8" height="1" rx="0" fill="#8e9cab" />
<rect x="261" y="481" width="3.8" height="1" rx="0" fill="#8e9cab" />
<rect x="261" y="487" width="3.8" height="1" rx="0" fill="#8e9cab" />
<rect x="261" y="493" width="3.8" height="1" rx="0" fill="#8e9cab" />
<rect x="261" y="498" width="3.8" height="1" rx="0" fill="#8e9cab" />
<rect x="261" y="506" width="3.8" height="1" rx="0" fill="#8e9cab" />
<rect x="261" y="514" width="3.8" height="1" rx="0" fill="#8e9cab" />
<rect x="261" y="524" width="3.8" height="1" rx="0" fill="#8e9cab" />
<rect x="261" y="533" width="3.8" height="1" rx="0" fill="#8e9cab" />
<rect x="261" y="541" width="3.8" height="1" rx="0" fill="#8e9cab" />
<rect x="261" y="547" width="3.8" height="1" rx="0" fill="#8e9cab" />
<rect x="274.7" y="422" width="10.8" height="134.5" rx="3" fill="#484d53" />
<rect x="278.7" y="426.7" width="3.6" height="126.3" rx="1.8" fill="#33404b" />
<rect x="272.5" y="452" width="1.7" height="1" rx="0" fill="#8a96a2" />
<rect x="287.5" y="452" width="1.7" height="1" rx="0" fill="#8a96a2" />
<rect x="294.8" y="421.3" width="7.2" height="49.7" rx="3.6" fill="#4a545c" />
<rect x="295.8" y="422.3" width="5.2" height="47.7" rx="2.6" fill="#56606a" />
<rect x="293.6" y="457.6" width="10.2" height="14.8" rx="5" fill="url(#trimG)" stroke="#30363c" stroke-width="0.8"/>
<rect x="293.8" y="464.3" width="9.8" height="1.3" rx="0" fill="#d0a030" />
<rect x="293.8" y="465.6" width="9.8" height="0.8" rx="0" fill="#e8d898" />
<circle cx="298.9" cy="483.6" r="6.4" fill="#59616a" stroke="#363c42" stroke-width="1.8"/>
<rect x="296" y="480" width="5.9" height="1.6" rx="0" fill="#c0c8d0" />
<rect x="298.1" y="480" width="1.7" height="7.5" rx="0" fill="#c0c8d0" />
<path d="M309 496.7 L294 496.7 Q291.2 496.7 291.2 499.5 L291.2 513.7 Q291.2 516.5 294 516.5 L309 516.5" fill="#4f575f" stroke="#3c434a" stroke-width="1"/>
<path d="M295.6 511.4 L301.8 505.2" stroke="#1c2024" stroke-width="1.5" stroke-linecap="round"/>
<path d="M305.5 503.5 A2.2 2.2 0 1 1 303.5 501.5" fill="none" stroke="#1c2024" stroke-width="1.7"/>
<rect x="275.9" y="537.3" width="10.1" height="20" rx="1" fill="#0e1012" />
<rect x="274.9" y="536.3" width="10.1" height="20.2" rx="0.8" fill="#2a2c2e" />
<rect x="274.9" y="536.3" width="10.1" height="4.2" rx="0.8" fill="#f4f6f8" />
<rect x="274.9" y="541.2" width="10.1" height="1.2" rx="0" fill="#f4f6f8" />
<rect x="274.9" y="543.1" width="10.1" height="1.8" rx="0" fill="#e4dcdc" />
<rect x="274.9" y="544.9" width="10.1" height="1.2" rx="0" fill="#1c80b0" />
<rect x="274.9" y="546.1" width="10.1" height="1.4" rx="0" fill="#48b4e0" />
<rect x="274.9" y="547.5" width="10.1" height="2" rx="0" fill="#e4dcdc" />
<rect x="274.9" y="550.2" width="10.1" height="1.2" rx="0" fill="#f4f6f8" />
<rect x="274.9" y="552.1" width="10.1" height="4.4" rx="0.8" fill="#f4f6f8" />
<rect x="255.4" y="560.9" width="28.2" height="13.8" rx="6.9" fill="#454c53" stroke="#3e454b" stroke-width="0.8"/>
<text x="269.5" y="570.8" font-size="9.4" fill="#e8c83a" text-anchor="middle" font-weight="normal" letter-spacing="0.4">-oo</text>
<path d="M309 560.9 L296.4 560.9 A6.9 6.9 0 0 0 296.4 574.7 L309 574.7" fill="#454c53" stroke="#363c42" stroke-width="1"/>
<path d="M309 562.2 L304 562.2 A5.6 5.6 0 0 0 304 573.4 L309 573.4" fill="#596168" stroke="#3a4046" stroke-width="1"/>
<path d="M301.9 567.3 L305.9 563.7 L305.9 570.9 Z" fill="#c4ccd4"/>
<rect x="251" y="579" width="58" height="1" rx="0" fill="#2a3036" />
<rect x="251" y="580" width="58" height="12" rx="0" fill="#3f454c" />
<text x="280.8" y="588.8" font-size="9.2" fill="#dce0e4" text-anchor="middle" font-weight="normal" style="white-space:pre" letter-spacing="0.75" stroke="#dce0e4" stroke-width="0.25">ADAT  7/8</text>
<path d="M311 592 L311 337 Q311 333 315 333 L365 333 Q369 333 369 337 L369 592 Z" fill="url(#panelA)"/>
<text x="340.2" y="344.2" font-size="9.5" fill="#ffffff" text-anchor="middle" font-weight="normal" style="white-space:pre" stroke="#ffffff" stroke-width="0.3">ADAT  7/8</text>
<path d="M337.57 352.42 Q341.83 355.5 346 355.5 L361.5 355.5 Q365 355.5 365 359 L365 367.3 Q365 370.8 361.5 370.8 L346 370.8 Q341.83 370.8 337.57 372.78 Z" fill="#2a2f34"/>
<rect x="341" y="363.2" width="23.5" height="7.1" rx="0" fill="#1f2428" />
<circle cx="328.4" cy="362.6" r="13.7" fill="#2a2f34" />
<circle cx="328.7" cy="362.9" r="12" fill="url(#knobG)" />
<rect x="327.6" y="352" width="1.9" height="11.6" rx="0" fill="#e0b838" />
<rect x="329.5" y="352" width="1.7" height="11.6" rx="0" fill="#0c0c0c" />
<text x="353.8" y="367.4" font-size="10.6" fill="#e8c840" text-anchor="middle" font-weight="normal" textLength="5" lengthAdjust="spacingAndGlyphs" >0</text>
<rect x="316.6" y="382.2" width="47.3" height="17.3" rx="8.6" fill="url(#msG)" stroke="#a9b1b8" stroke-width="1.3"/>
<rect x="339.5" y="383" width="1" height="16" rx="0" fill="#30363c" />
<text x="328" y="394.6" font-size="10" fill="#d0d4d8" text-anchor="middle" font-weight="normal" >M</text>
<text x="352" y="394.6" font-size="10" fill="#d0d4d8" text-anchor="middle" font-weight="normal" >S</text>
<rect x="316" y="404.7" width="48.5" height="13.3" rx="6.5" fill="#4e565e" />
<text x="340" y="413.6" font-size="9.2" fill="#b9c1c9" text-anchor="middle" font-weight="normal" style="white-space:pre">UFL  UFL</text>
<rect x="315.8" y="420.8" width="13.9" height="135.6" rx="2.5" fill="#0e1114" />
<rect x="316.8" y="421.8" width="11.9" height="133.6" rx="1.5" fill="#1f262c" />
<rect x="318.8" y="423.3" width="8" height="12" rx="0" fill="#3d2b2c" />
<text x="322.9" y="454.6" font-size="9" fill="#a8b8c8" text-anchor="middle" font-weight="normal" textLength="3.8" lengthAdjust="spacingAndGlyphs" >0</text>
<rect x="319" y="451.3" width="1" height="1" rx="0" fill="#8a9aa8" />
<rect x="325.8" y="451.3" width="1" height="1" rx="0" fill="#8a9aa8" />
<rect x="321" y="462" width="3.8" height="1" rx="0" fill="#8e9cab" />
<rect x="321" y="472" width="3.8" height="1" rx="0" fill="#8e9cab" />
<rect x="321" y="481" width="3.8" height="1" rx="0" fill="#8e9cab" />
<rect x="321" y="487" width="3.8" height="1" rx="0" fill="#8e9cab" />
<rect x="321" y="493" width="3.8" height="1" rx="0" fill="#8e9cab" />
<rect x="321" y="498" width="3.8" height="1" rx="0" fill="#8e9cab" />
<rect x="321" y="506" width="3.8" height="1" rx="0" fill="#8e9cab" />
<rect x="321" y="514" width="3.8" height="1" rx="0" fill="#8e9cab" />
<rect x="321" y="524" width="3.8" height="1" rx="0" fill="#8e9cab" />
<rect x="321" y="533" width="3.8" height="1" rx="0" fill="#8e9cab" />
<rect x="321" y="541" width="3.8" height="1" rx="0" fill="#8e9cab" />
<rect x="321" y="547" width="3.8" height="1" rx="0" fill="#8e9cab" />
<rect x="334.7" y="422" width="10.8" height="134.5" rx="3" fill="#484d53" />
<rect x="338.7" y="426.7" width="3.6" height="126.3" rx="1.8" fill="#33404b" />
<rect x="332.5" y="452" width="1.7" height="1" rx="0" fill="#8a96a2" />
<rect x="347.5" y="452" width="1.7" height="1" rx="0" fill="#8a96a2" />
<rect x="354.8" y="421.3" width="7.2" height="49.7" rx="3.6" fill="#4a545c" />
<rect x="355.8" y="422.3" width="5.2" height="47.7" rx="2.6" fill="#56606a" />
<rect x="353.6" y="457.6" width="10.2" height="14.8" rx="5" fill="url(#trimG)" stroke="#30363c" stroke-width="0.8"/>
<rect x="353.8" y="464.3" width="9.8" height="1.3" rx="0" fill="#d0a030" />
<rect x="353.8" y="465.6" width="9.8" height="0.8" rx="0" fill="#e8d898" />
<circle cx="358.9" cy="483.6" r="6.4" fill="#59616a" stroke="#363c42" stroke-width="1.8"/>
<rect x="356" y="480" width="5.9" height="1.6" rx="0" fill="#c0c8d0" />
<rect x="358.1" y="480" width="1.7" height="7.5" rx="0" fill="#c0c8d0" />
<path d="M369 496.7 L354 496.7 Q351.2 496.7 351.2 499.5 L351.2 513.7 Q351.2 516.5 354 516.5 L369 516.5" fill="#4f575f" stroke="#3c434a" stroke-width="1"/>
<path d="M355.6 511.4 L361.8 505.2" stroke="#1c2024" stroke-width="1.5" stroke-linecap="round"/>
<path d="M365.5 503.5 A2.2 2.2 0 1 1 363.5 501.5" fill="none" stroke="#1c2024" stroke-width="1.7"/>
<rect x="335.9" y="442.4" width="10.1" height="20" rx="1" fill="#0e1012" />
<rect x="334.9" y="441.4" width="10.1" height="20.2" rx="0.8" fill="#2a2c2e" />
<rect x="334.9" y="441.4" width="10.1" height="4.2" rx="0.8" fill="#f4f6f8" />
<rect x="334.9" y="446.3" width="10.1" height="1.2" rx="0" fill="#f4f6f8" />
<rect x="334.9" y="448.2" width="10.1" height="1.8" rx="0" fill="#e4dcdc" />
<rect x="334.9" y="450" width="10.1" height="1.2" rx="0" fill="#1c80b0" />
<rect x="334.9" y="451.2" width="10.1" height="1.4" rx="0" fill="#48b4e0" />
<rect x="334.9" y="452.6" width="10.1" height="2" rx="0" fill="#e4dcdc" />
<rect x="334.9" y="455.3" width="10.1" height="1.2" rx="0" fill="#f4f6f8" />
<rect x="334.9" y="457.2" width="10.1" height="4.4" rx="0.8" fill="#f4f6f8" />
<rect x="315.4" y="560.9" width="28.2" height="13.8" rx="6.9" fill="#454c53" stroke="#3e454b" stroke-width="0.8"/>
<text x="329.5" y="570.8" font-size="9.4" fill="#e8c83a" text-anchor="middle" font-weight="normal" letter-spacing="0.4">0.0</text>
<path d="M369 560.9 L356.4 560.9 A6.9 6.9 0 0 0 356.4 574.7 L369 574.7" fill="#454c53" stroke="#363c42" stroke-width="1"/>
<path d="M369 562.2 L364 562.2 A5.6 5.6 0 0 0 364 573.4 L369 573.4" fill="#596168" stroke="#3a4046" stroke-width="1"/>
<path d="M361.9 567.3 L365.9 563.7 L365.9 570.9 Z" fill="#c4ccd4"/>
<rect x="311" y="579" width="58" height="1" rx="0" fill="#2a3036" />
<rect x="311" y="580" width="58" height="12" rx="0" fill="#3f454c" />
<text x="340.8" y="588.8" font-size="9.2" fill="#dce0e4" text-anchor="middle" font-weight="normal" style="white-space:pre" letter-spacing="0.75" stroke="#dce0e4" stroke-width="0.25">ADAT  7/8</text>
<rect x="10" y="593.5" width="359" height="13" rx="0" fill="url(#barG)" />
<rect x="10" y="593.5" width="359" height="0.8" rx="0" fill="#2a2f34" />
<text x="22.6" y="604.3" font-size="11" fill="#a9b4be" text-anchor="start" font-weight="bold" textLength="72" lengthAdjust="spacingAndGlyphs" >SOFTWARE PLAYBACK</text>
<rect x="103.5" y="594.5" width="260" height="10" rx="5" fill="#2a2f34" />
<rect x="105.5" y="595.5" width="256" height="8" rx="4" fill="url(#scrG)" />
<rect x="6" y="599.3" width="11" height="2" rx="0" fill="#3aa6c0" />
<rect x="366" y="599.5" width="3" height="2" rx="0" fill="#3aa6c0" />
<rect x="11" y="606" width="238" height="265" rx="0" fill="#25292d" />
<rect x="6" y="606" width="4" height="265" rx="0" fill="#2b7d33" />
<path d="M11 856.5 L11 611.5 Q11 607.5 15 607.5 L65 607.5 Q69 607.5 69 611.5 L69 856.5 Z" fill="url(#panelB)"/>
<text x="40.2" y="618.7" font-size="9.5" fill="#ffffff" text-anchor="middle" font-weight="normal" style="white-space:pre" stroke="#ffffff" stroke-width="0.3">AS  1/2</text>
<path d="M37.57 626.92 Q41.83 630 46 630 L61.5 630 Q65 630 65 633.5 L65 641.8 Q65 645.3 61.5 645.3 L46 645.3 Q41.83 645.3 37.57 647.28 Z" fill="#25282b"/>
<rect x="41" y="637.7" width="23.5" height="7.1" rx="0" fill="#191c1f" />
<circle cx="28.4" cy="637.1" r="13.7" fill="#25282b" />
<circle cx="28.7" cy="637.4" r="12" fill="url(#knobGd)" />
<rect x="27.6" y="626.5" width="1.9" height="11.6" rx="0" fill="#e0b838" />
<rect x="29.5" y="626.5" width="1.7" height="11.6" rx="0" fill="#0c0c0c" />
<text x="53.8" y="641.9" font-size="10.6" fill="#e8c840" text-anchor="middle" font-weight="normal" textLength="5" lengthAdjust="spacingAndGlyphs" >0</text>
<rect x="16.6" y="656.7" width="47.3" height="17.3" rx="8.6" fill="url(#msGd)" stroke="#62686e" stroke-width="1.3"/>
<path d="M40.5 657.4 L55.3 657.4 A7.9 7.9 0 0 1 55.3 673.3 L40.5 673.3 Z" fill="url(#cueG)"/>
<text x="51.8" y="669.1" font-size="10" fill="#b4ecc0" text-anchor="middle" font-weight="normal" textLength="17.5" lengthAdjust="spacingAndGlyphs" >CUE</text>
<rect x="39.5" y="657.5" width="1" height="16" rx="0" fill="#1e2124" />
<text x="28" y="669.1" font-size="10" fill="#b8bec4" text-anchor="middle" font-weight="normal" >M</text>
<rect x="16" y="679.2" width="48.5" height="13.3" rx="6.5" fill="#2e3236" />
<text x="40" y="688.1" font-size="9.2" fill="#aab2ba" text-anchor="middle" font-weight="normal" style="white-space:pre">UFL  UFL</text>
<rect x="15.8" y="695.3" width="13.9" height="135.6" rx="2.5" fill="#0e1114" />
<rect x="16.8" y="696.3" width="11.9" height="133.6" rx="1.5" fill="#20262b" />
<rect x="18.8" y="697.8" width="8" height="12" rx="0" fill="#2e2426" />
<text x="22.9" y="729.1" font-size="9" fill="#a8b8c8" text-anchor="middle" font-weight="normal" textLength="3.8" lengthAdjust="spacingAndGlyphs" >0</text>
<rect x="19" y="725.8" width="1" height="1" rx="0" fill="#8a9aa8" />
<rect x="25.8" y="725.8" width="1" height="1" rx="0" fill="#8a9aa8" />
<rect x="21" y="737" width="3.8" height="1" rx="0" fill="#8e9cab" />
<rect x="21" y="747" width="3.8" height="1" rx="0" fill="#8e9cab" />
<rect x="21" y="756" width="3.8" height="1" rx="0" fill="#8e9cab" />
<rect x="21" y="761" width="3.8" height="1" rx="0" fill="#8e9cab" />
<rect x="21" y="768" width="3.8" height="1" rx="0" fill="#8e9cab" />
<rect x="21" y="773" width="3.8" height="1" rx="0" fill="#8e9cab" />
<rect x="21" y="781" width="3.8" height="1" rx="0" fill="#8e9cab" />
<rect x="21" y="788" width="3.8" height="1" rx="0" fill="#8e9cab" />
<rect x="21" y="799" width="3.8" height="1" rx="0" fill="#8e9cab" />
<rect x="21" y="808" width="3.8" height="1" rx="0" fill="#8e9cab" />
<rect x="21" y="816" width="3.8" height="1" rx="0" fill="#8e9cab" />
<rect x="21" y="822" width="3.8" height="1" rx="0" fill="#8e9cab" />
<rect x="35" y="696.5" width="11" height="134.5" rx="3.5" fill="#25282b" />
<rect x="38.7" y="701.2" width="3.6" height="126.3" rx="1.8" fill="#0f1214" />
<rect x="32.5" y="726.5" width="1.7" height="1" rx="0" fill="#8a96a2" />
<rect x="47.5" y="726.5" width="1.7" height="1" rx="0" fill="#8a96a2" />
<rect x="54.3" y="695.8" width="8.2" height="50.7" rx="3.8" fill="#111315" />
<rect x="55.6" y="697.1" width="5.6" height="48.1" rx="2.8" fill="#2c3034" />
<rect x="53.6" y="732.9" width="10.2" height="14.2" rx="5" fill="url(#trimGd)" stroke="#202326" stroke-width="0.8"/>
<rect x="53.8" y="738.9" width="9.8" height="1.6" rx="0" fill="#78c830" />
<rect x="53.8" y="740.5" width="9.8" height="0.8" rx="0" fill="#c0f080" />
<path d="M69 771.2 L54 771.2 Q51.2 771.2 51.2 774 L51.2 807.4 Q51.2 810.2 54 810.2 L69 810.2" fill="#2e3236" stroke="#25282b" stroke-width="1"/>
<path d="M55.6 785.9 L61.8 779.7" stroke="#7a8086" stroke-width="1.5" stroke-linecap="round"/>
<path d="M65.5 778 A2.2 2.2 0 1 1 63.5 776" fill="none" stroke="#7a8086" stroke-width="1.7"/>
<rect x="51.5" y="790.5" width="17.5" height="1" rx="0" fill="#25282b" />
<text x="60.2" y="804.7" font-size="9.6" fill="#7a8086" text-anchor="middle" font-weight="bold" textLength="10.5" lengthAdjust="spacingAndGlyphs" >EQ</text>
<rect x="36.7" y="717" width="9.4" height="20" rx="1" fill="#0e1012" />
<rect x="35.7" y="716" width="9.4" height="20.2" rx="0.8" fill="#2a2c2e" />
<rect x="35.7" y="716" width="9.4" height="4.2" rx="0.8" fill="#c8c8c8" />
<rect x="35.7" y="720.9" width="9.4" height="1.2" rx="0" fill="#c8c8c8" />
<rect x="35.7" y="722.8" width="9.4" height="1.8" rx="0" fill="#a8a8a8" />
<rect x="35.7" y="724.6" width="9.4" height="1.2" rx="0" fill="#7890a0" />
<rect x="35.7" y="725.8" width="9.4" height="1.4" rx="0" fill="#98aab8" />
<rect x="35.7" y="727.2" width="9.4" height="2" rx="0" fill="#a8a8a8" />
<rect x="35.7" y="729.9" width="9.4" height="1.2" rx="0" fill="#c8c8c8" />
<rect x="35.7" y="731.8" width="9.4" height="4.4" rx="0.8" fill="#c8c8c8" />
<rect x="15.4" y="835.4" width="28.2" height="13.8" rx="6.9" fill="#25292c" stroke="#1e2124" stroke-width="0.8"/>
<text x="29.5" y="845.3" font-size="9.4" fill="#e8c83a" text-anchor="middle" font-weight="normal" letter-spacing="0.4">0.0</text>
<path d="M69 835.4 L56.4 835.4 A6.9 6.9 0 0 0 56.4 849.2 L69 849.2" fill="#25292c" stroke="#1a1d20" stroke-width="1"/>
<path d="M69 836.7 L64 836.7 A5.6 5.6 0 0 0 64 847.9 L69 847.9" fill="#383d42" stroke="#1e2124" stroke-width="1"/>
<path d="M61.9 841.8 L65.9 838.2 L65.9 845.4 Z" fill="#a4aab0"/>
<path d="M71 856.5 L71 611.5 Q71 607.5 75 607.5 L125 607.5 Q129 607.5 129 611.5 L129 856.5 Z" fill="url(#panelB)"/>
<text x="100.2" y="618.7" font-size="9.5" fill="#ffffff" text-anchor="middle" font-weight="normal" style="white-space:pre" stroke="#ffffff" stroke-width="0.3">ADAT  3/4</text>
<path d="M97.57 626.92 Q101.83 630 106 630 L121.5 630 Q125 630 125 633.5 L125 641.8 Q125 645.3 121.5 645.3 L106 645.3 Q101.83 645.3 97.57 647.28 Z" fill="#25282b"/>
<rect x="101" y="637.7" width="23.5" height="7.1" rx="0" fill="#191c1f" />
<circle cx="88.4" cy="637.1" r="13.7" fill="#25282b" />
<circle cx="88.7" cy="637.4" r="12" fill="url(#knobGd)" />
<rect x="87.6" y="626.5" width="1.9" height="11.6" rx="0" fill="#e0b838" />
<rect x="89.5" y="626.5" width="1.7" height="11.6" rx="0" fill="#0c0c0c" />
<text x="113.8" y="641.9" font-size="10.6" fill="#e8c840" text-anchor="middle" font-weight="normal" textLength="5" lengthAdjust="spacingAndGlyphs" >0</text>
<rect x="76.6" y="656.7" width="47.3" height="17.3" rx="8.6" fill="url(#msGd)" stroke="#62686e" stroke-width="1.3"/>
<path d="M100.5 657.4 L115.3 657.4 A7.9 7.9 0 0 1 115.3 673.3 L100.5 673.3 Z" fill="url(#cueG)"/>
<text x="111.8" y="669.1" font-size="10" fill="#b4ecc0" text-anchor="middle" font-weight="normal" textLength="17.5" lengthAdjust="spacingAndGlyphs" >CUE</text>
<rect x="99.5" y="657.5" width="1" height="16" rx="0" fill="#1e2124" />
<text x="88" y="669.1" font-size="10" fill="#b8bec4" text-anchor="middle" font-weight="normal" >M</text>
<rect x="76" y="679.2" width="48.5" height="13.3" rx="6.5" fill="#2e3236" />
<text x="100" y="688.1" font-size="9.2" fill="#aab2ba" text-anchor="middle" font-weight="normal" style="white-space:pre">UFL  UFL</text>
<rect x="75.8" y="695.3" width="13.9" height="135.6" rx="2.5" fill="#0e1114" />
<rect x="76.8" y="696.3" width="11.9" height="133.6" rx="1.5" fill="#20262b" />
<rect x="78.8" y="697.8" width="8" height="12" rx="0" fill="#2e2426" />
<text x="82.9" y="729.1" font-size="9" fill="#a8b8c8" text-anchor="middle" font-weight="normal" textLength="3.8" lengthAdjust="spacingAndGlyphs" >0</text>
<rect x="79" y="725.8" width="1" height="1" rx="0" fill="#8a9aa8" />
<rect x="85.8" y="725.8" width="1" height="1" rx="0" fill="#8a9aa8" />
<rect x="81" y="737" width="3.8" height="1" rx="0" fill="#8e9cab" />
<rect x="81" y="747" width="3.8" height="1" rx="0" fill="#8e9cab" />
<rect x="81" y="756" width="3.8" height="1" rx="0" fill="#8e9cab" />
<rect x="81" y="761" width="3.8" height="1" rx="0" fill="#8e9cab" />
<rect x="81" y="768" width="3.8" height="1" rx="0" fill="#8e9cab" />
<rect x="81" y="773" width="3.8" height="1" rx="0" fill="#8e9cab" />
<rect x="81" y="781" width="3.8" height="1" rx="0" fill="#8e9cab" />
<rect x="81" y="788" width="3.8" height="1" rx="0" fill="#8e9cab" />
<rect x="81" y="799" width="3.8" height="1" rx="0" fill="#8e9cab" />
<rect x="81" y="808" width="3.8" height="1" rx="0" fill="#8e9cab" />
<rect x="81" y="816" width="3.8" height="1" rx="0" fill="#8e9cab" />
<rect x="81" y="822" width="3.8" height="1" rx="0" fill="#8e9cab" />
<rect x="95" y="696.5" width="11" height="134.5" rx="3.5" fill="#25282b" />
<rect x="98.7" y="701.2" width="3.6" height="126.3" rx="1.8" fill="#0f1214" />
<rect x="92.5" y="726.5" width="1.7" height="1" rx="0" fill="#8a96a2" />
<rect x="107.5" y="726.5" width="1.7" height="1" rx="0" fill="#8a96a2" />
<rect x="114.3" y="695.8" width="8.2" height="50.7" rx="3.8" fill="#111315" />
<rect x="115.6" y="697.1" width="5.6" height="48.1" rx="2.8" fill="#2c3034" />
<rect x="113.6" y="732.9" width="10.2" height="14.2" rx="5" fill="url(#trimGd)" stroke="#202326" stroke-width="0.8"/>
<rect x="113.8" y="738.9" width="9.8" height="1.6" rx="0" fill="#78c830" />
<rect x="113.8" y="740.5" width="9.8" height="0.8" rx="0" fill="#c0f080" />
<path d="M129 771.2 L114 771.2 Q111.2 771.2 111.2 774 L111.2 807.4 Q111.2 810.2 114 810.2 L129 810.2" fill="#2e3236" stroke="#25282b" stroke-width="1"/>
<path d="M115.6 785.9 L121.8 779.7" stroke="#7a8086" stroke-width="1.5" stroke-linecap="round"/>
<path d="M125.5 778 A2.2 2.2 0 1 1 123.5 776" fill="none" stroke="#7a8086" stroke-width="1.7"/>
<rect x="111.5" y="790.5" width="17.5" height="1" rx="0" fill="#25282b" />
<text x="120.2" y="804.7" font-size="9.6" fill="#7a8086" text-anchor="middle" font-weight="bold" textLength="10.5" lengthAdjust="spacingAndGlyphs" >EQ</text>
<rect x="96.7" y="717" width="9.4" height="20" rx="1" fill="#0e1012" />
<rect x="95.7" y="716" width="9.4" height="20.2" rx="0.8" fill="#2a2c2e" />
<rect x="95.7" y="716" width="9.4" height="4.2" rx="0.8" fill="#c8c8c8" />
<rect x="95.7" y="720.9" width="9.4" height="1.2" rx="0" fill="#c8c8c8" />
<rect x="95.7" y="722.8" width="9.4" height="1.8" rx="0" fill="#a8a8a8" />
<rect x="95.7" y="724.6" width="9.4" height="1.2" rx="0" fill="#7890a0" />
<rect x="95.7" y="725.8" width="9.4" height="1.4" rx="0" fill="#98aab8" />
<rect x="95.7" y="727.2" width="9.4" height="2" rx="0" fill="#a8a8a8" />
<rect x="95.7" y="729.9" width="9.4" height="1.2" rx="0" fill="#c8c8c8" />
<rect x="95.7" y="731.8" width="9.4" height="4.4" rx="0.8" fill="#c8c8c8" />
<rect x="75.4" y="835.4" width="28.2" height="13.8" rx="6.9" fill="#25292c" stroke="#1e2124" stroke-width="0.8"/>
<text x="89.5" y="845.3" font-size="9.4" fill="#e8c83a" text-anchor="middle" font-weight="normal" letter-spacing="0.4">0.0</text>
<path d="M129 835.4 L116.4 835.4 A6.9 6.9 0 0 0 116.4 849.2 L129 849.2" fill="#25292c" stroke="#1a1d20" stroke-width="1"/>
<path d="M129 836.7 L124 836.7 A5.6 5.6 0 0 0 124 847.9 L129 847.9" fill="#383d42" stroke="#1e2124" stroke-width="1"/>
<path d="M121.9 841.8 L125.9 838.2 L125.9 845.4 Z" fill="#a4aab0"/>
<path d="M131 856.5 L131 611.5 Q131 607.5 135 607.5 L185 607.5 Q189 607.5 189 611.5 L189 856.5 Z" fill="url(#panelB)"/>
<text x="160.2" y="618.7" font-size="9.5" fill="#ffffff" text-anchor="middle" font-weight="normal" style="white-space:pre" stroke="#ffffff" stroke-width="0.3">ADAT  5/6</text>
<path d="M157.57 626.92 Q161.83 630 166 630 L181.5 630 Q185 630 185 633.5 L185 641.8 Q185 645.3 181.5 645.3 L166 645.3 Q161.83 645.3 157.57 647.28 Z" fill="#25282b"/>
<rect x="161" y="637.7" width="23.5" height="7.1" rx="0" fill="#191c1f" />
<circle cx="148.4" cy="637.1" r="13.7" fill="#25282b" />
<circle cx="148.7" cy="637.4" r="12" fill="url(#knobGd)" />
<rect x="147.6" y="626.5" width="1.9" height="11.6" rx="0" fill="#e0b838" />
<rect x="149.5" y="626.5" width="1.7" height="11.6" rx="0" fill="#0c0c0c" />
<text x="173.8" y="641.9" font-size="10.6" fill="#e8c840" text-anchor="middle" font-weight="normal" textLength="5" lengthAdjust="spacingAndGlyphs" >0</text>
<rect x="136.6" y="656.7" width="47.3" height="17.3" rx="8.6" fill="url(#msGd)" stroke="#62686e" stroke-width="1.3"/>
<path d="M160.5 657.4 L175.3 657.4 A7.9 7.9 0 0 1 175.3 673.3 L160.5 673.3 Z" fill="url(#cueG)"/>
<text x="171.8" y="669.1" font-size="10" fill="#b4ecc0" text-anchor="middle" font-weight="normal" textLength="17.5" lengthAdjust="spacingAndGlyphs" >CUE</text>
<rect x="159.5" y="657.5" width="1" height="16" rx="0" fill="#1e2124" />
<text x="148" y="669.1" font-size="10" fill="#b8bec4" text-anchor="middle" font-weight="normal" >M</text>
<rect x="136" y="679.2" width="48.5" height="13.3" rx="6.5" fill="#2e3236" />
<text x="160" y="688.1" font-size="9.2" fill="#aab2ba" text-anchor="middle" font-weight="normal" style="white-space:pre">UFL  UFL</text>
<rect x="135.8" y="695.3" width="13.9" height="135.6" rx="2.5" fill="#0e1114" />
<rect x="136.8" y="696.3" width="11.9" height="133.6" rx="1.5" fill="#20262b" />
<rect x="138.8" y="697.8" width="8" height="12" rx="0" fill="#2e2426" />
<text x="142.9" y="729.1" font-size="9" fill="#a8b8c8" text-anchor="middle" font-weight="normal" textLength="3.8" lengthAdjust="spacingAndGlyphs" >0</text>
<rect x="139" y="725.8" width="1" height="1" rx="0" fill="#8a9aa8" />
<rect x="145.8" y="725.8" width="1" height="1" rx="0" fill="#8a9aa8" />
<rect x="141" y="737" width="3.8" height="1" rx="0" fill="#8e9cab" />
<rect x="141" y="747" width="3.8" height="1" rx="0" fill="#8e9cab" />
<rect x="141" y="756" width="3.8" height="1" rx="0" fill="#8e9cab" />
<rect x="141" y="761" width="3.8" height="1" rx="0" fill="#8e9cab" />
<rect x="141" y="768" width="3.8" height="1" rx="0" fill="#8e9cab" />
<rect x="141" y="773" width="3.8" height="1" rx="0" fill="#8e9cab" />
<rect x="141" y="781" width="3.8" height="1" rx="0" fill="#8e9cab" />
<rect x="141" y="788" width="3.8" height="1" rx="0" fill="#8e9cab" />
<rect x="141" y="799" width="3.8" height="1" rx="0" fill="#8e9cab" />
<rect x="141" y="808" width="3.8" height="1" rx="0" fill="#8e9cab" />
<rect x="141" y="816" width="3.8" height="1" rx="0" fill="#8e9cab" />
<rect x="141" y="822" width="3.8" height="1" rx="0" fill="#8e9cab" />
<rect x="155" y="696.5" width="11" height="134.5" rx="3.5" fill="#25282b" />
<rect x="158.7" y="701.2" width="3.6" height="126.3" rx="1.8" fill="#0f1214" />
<rect x="152.5" y="726.5" width="1.7" height="1" rx="0" fill="#8a96a2" />
<rect x="167.5" y="726.5" width="1.7" height="1" rx="0" fill="#8a96a2" />
<rect x="174.3" y="695.8" width="8.2" height="50.7" rx="3.8" fill="#111315" />
<rect x="175.6" y="697.1" width="5.6" height="48.1" rx="2.8" fill="#2c3034" />
<rect x="173.6" y="732.9" width="10.2" height="14.2" rx="5" fill="url(#trimGd)" stroke="#202326" stroke-width="0.8"/>
<rect x="173.8" y="738.9" width="9.8" height="1.6" rx="0" fill="#78c830" />
<rect x="173.8" y="740.5" width="9.8" height="0.8" rx="0" fill="#c0f080" />
<path d="M189 771.2 L174 771.2 Q171.2 771.2 171.2 774 L171.2 807.4 Q171.2 810.2 174 810.2 L189 810.2" fill="#2e3236" stroke="#25282b" stroke-width="1"/>
<path d="M175.6 785.9 L181.8 779.7" stroke="#7a8086" stroke-width="1.5" stroke-linecap="round"/>
<path d="M185.5 778 A2.2 2.2 0 1 1 183.5 776" fill="none" stroke="#7a8086" stroke-width="1.7"/>
<rect x="171.5" y="790.5" width="17.5" height="1" rx="0" fill="#25282b" />
<text x="180.2" y="804.7" font-size="9.6" fill="#7a8086" text-anchor="middle" font-weight="bold" textLength="10.5" lengthAdjust="spacingAndGlyphs" >EQ</text>
<rect x="156.7" y="717" width="9.4" height="20" rx="1" fill="#0e1012" />
<rect x="155.7" y="716" width="9.4" height="20.2" rx="0.8" fill="#2a2c2e" />
<rect x="155.7" y="716" width="9.4" height="4.2" rx="0.8" fill="#c8c8c8" />
<rect x="155.7" y="720.9" width="9.4" height="1.2" rx="0" fill="#c8c8c8" />
<rect x="155.7" y="722.8" width="9.4" height="1.8" rx="0" fill="#a8a8a8" />
<rect x="155.7" y="724.6" width="9.4" height="1.2" rx="0" fill="#7890a0" />
<rect x="155.7" y="725.8" width="9.4" height="1.4" rx="0" fill="#98aab8" />
<rect x="155.7" y="727.2" width="9.4" height="2" rx="0" fill="#a8a8a8" />
<rect x="155.7" y="729.9" width="9.4" height="1.2" rx="0" fill="#c8c8c8" />
<rect x="155.7" y="731.8" width="9.4" height="4.4" rx="0.8" fill="#c8c8c8" />
<rect x="135.4" y="835.4" width="28.2" height="13.8" rx="6.9" fill="#25292c" stroke="#1e2124" stroke-width="0.8"/>
<text x="149.5" y="845.3" font-size="9.4" fill="#e8c83a" text-anchor="middle" font-weight="normal" letter-spacing="0.4">0.0</text>
<path d="M189 835.4 L176.4 835.4 A6.9 6.9 0 0 0 176.4 849.2 L189 849.2" fill="#25292c" stroke="#1a1d20" stroke-width="1"/>
<path d="M189 836.7 L184 836.7 A5.6 5.6 0 0 0 184 847.9 L189 847.9" fill="#383d42" stroke="#1e2124" stroke-width="1"/>
<path d="M181.9 841.8 L185.9 838.2 L185.9 845.4 Z" fill="#a4aab0"/>
<path d="M191 856.5 L191 611.5 Q191 607.5 195 607.5 L245 607.5 Q249 607.5 249 611.5 L249 856.5 Z" fill="url(#panelA)"/>
<text x="220.2" y="618.7" font-size="9.5" fill="#ffffff" text-anchor="middle" font-weight="normal" style="white-space:pre" stroke="#ffffff" stroke-width="0.3">ADAT  7/8</text>
<path d="M217.57 626.92 Q221.83 630 226 630 L241.5 630 Q245 630 245 633.5 L245 641.8 Q245 645.3 241.5 645.3 L226 645.3 Q221.83 645.3 217.57 647.28 Z" fill="#2a2f34"/>
<rect x="221" y="637.7" width="23.5" height="7.1" rx="0" fill="#1f2428" />
<circle cx="208.4" cy="637.1" r="13.7" fill="#2a2f34" />
<circle cx="208.7" cy="637.4" r="12" fill="url(#knobG)" />
<rect x="207.6" y="626.5" width="1.9" height="11.6" rx="0" fill="#e0b838" />
<rect x="209.5" y="626.5" width="1.7" height="11.6" rx="0" fill="#0c0c0c" />
<text x="233.8" y="641.9" font-size="10.6" fill="#e8c840" text-anchor="middle" font-weight="normal" textLength="5" lengthAdjust="spacingAndGlyphs" >0</text>
<rect x="196.6" y="656.7" width="47.3" height="17.3" rx="8.6" fill="url(#msGd)" stroke="#a4acb4" stroke-width="1.3"/>
<path d="M220.5 657.4 L235.3 657.4 A7.9 7.9 0 0 1 235.3 673.3 L220.5 673.3 Z" fill="url(#cueG)"/>
<text x="231.8" y="669.1" font-size="10" fill="#b4ecc0" text-anchor="middle" font-weight="normal" textLength="17.5" lengthAdjust="spacingAndGlyphs" >CUE</text>
<rect x="219.5" y="657.5" width="1" height="16" rx="0" fill="#1e2124" />
<text x="208" y="669.1" font-size="10" fill="#c8ccd0" text-anchor="middle" font-weight="normal" >M</text>
<rect x="196" y="679.2" width="48.5" height="13.3" rx="6.5" fill="#4e565e" />
<text x="220" y="688.1" font-size="9.2" fill="#b9c1c9" text-anchor="middle" font-weight="normal" style="white-space:pre">UFL  UFL</text>
<rect x="195.8" y="695.3" width="13.9" height="135.6" rx="2.5" fill="#0e1114" />
<rect x="196.8" y="696.3" width="11.9" height="133.6" rx="1.5" fill="#1f262c" />
<rect x="198.8" y="697.8" width="8" height="12" rx="0" fill="#3d2b2c" />
<text x="202.9" y="729.1" font-size="9" fill="#a8b8c8" text-anchor="middle" font-weight="normal" textLength="3.8" lengthAdjust="spacingAndGlyphs" >0</text>
<rect x="199" y="725.8" width="1" height="1" rx="0" fill="#8a9aa8" />
<rect x="205.8" y="725.8" width="1" height="1" rx="0" fill="#8a9aa8" />
<rect x="201" y="737" width="3.8" height="1" rx="0" fill="#8e9cab" />
<rect x="201" y="747" width="3.8" height="1" rx="0" fill="#8e9cab" />
<rect x="201" y="756" width="3.8" height="1" rx="0" fill="#8e9cab" />
<rect x="201" y="761" width="3.8" height="1" rx="0" fill="#8e9cab" />
<rect x="201" y="768" width="3.8" height="1" rx="0" fill="#8e9cab" />
<rect x="201" y="773" width="3.8" height="1" rx="0" fill="#8e9cab" />
<rect x="201" y="781" width="3.8" height="1" rx="0" fill="#8e9cab" />
<rect x="201" y="788" width="3.8" height="1" rx="0" fill="#8e9cab" />
<rect x="201" y="799" width="3.8" height="1" rx="0" fill="#8e9cab" />
<rect x="201" y="808" width="3.8" height="1" rx="0" fill="#8e9cab" />
<rect x="201" y="816" width="3.8" height="1" rx="0" fill="#8e9cab" />
<rect x="201" y="822" width="3.8" height="1" rx="0" fill="#8e9cab" />
<rect x="214.7" y="696.5" width="10.8" height="134.5" rx="3" fill="#484d53" />
<rect x="218.7" y="701.2" width="3.6" height="126.3" rx="1.8" fill="#33404b" />
<rect x="212.5" y="726.5" width="1.7" height="1" rx="0" fill="#8a96a2" />
<rect x="227.5" y="726.5" width="1.7" height="1" rx="0" fill="#8a96a2" />
<rect x="234.8" y="695.8" width="7.2" height="49.7" rx="3.6" fill="#4a545c" />
<rect x="235.8" y="696.8" width="5.2" height="47.7" rx="2.6" fill="#56606a" />
<rect x="233.6" y="732.1" width="10.2" height="14.8" rx="5" fill="url(#trimGd)" stroke="#30363c" stroke-width="0.8"/>
<rect x="233.8" y="738.1" width="9.8" height="1.6" rx="0" fill="#78c830" />
<rect x="233.8" y="739.7" width="9.8" height="0.8" rx="0" fill="#c0f080" />
<path d="M249 771.2 L234 771.2 Q231.2 771.2 231.2 774 L231.2 807.4 Q231.2 810.2 234 810.2 L249 810.2" fill="#4f575f" stroke="#3c434a" stroke-width="1"/>
<path d="M235.6 785.9 L241.8 779.7" stroke="#1c2024" stroke-width="1.5" stroke-linecap="round"/>
<path d="M245.5 778 A2.2 2.2 0 1 1 243.5 776" fill="none" stroke="#1c2024" stroke-width="1.7"/>
<rect x="231.5" y="790.5" width="17.5" height="1" rx="0" fill="#3c434a" />
<text x="240.2" y="804.7" font-size="9.6" fill="#1c2024" text-anchor="middle" font-weight="bold" textLength="10.5" lengthAdjust="spacingAndGlyphs" >EQ</text>
<rect x="215.9" y="719.1" width="10.1" height="20" rx="1" fill="#0e1012" />
<rect x="214.9" y="718.1" width="10.1" height="20.2" rx="0.8" fill="#2a2c2e" />
<rect x="214.9" y="718.1" width="10.1" height="4.2" rx="0.8" fill="#f4f6f8" />
<rect x="214.9" y="723" width="10.1" height="1.2" rx="0" fill="#f4f6f8" />
<rect x="214.9" y="724.9" width="10.1" height="1.8" rx="0" fill="#e4dcdc" />
<rect x="214.9" y="726.7" width="10.1" height="1.2" rx="0" fill="#1c80b0" />
<rect x="214.9" y="727.9" width="10.1" height="1.4" rx="0" fill="#48b4e0" />
<rect x="214.9" y="729.3" width="10.1" height="2" rx="0" fill="#e4dcdc" />
<rect x="214.9" y="732" width="10.1" height="1.2" rx="0" fill="#f4f6f8" />
<rect x="214.9" y="733.9" width="10.1" height="4.4" rx="0.8" fill="#f4f6f8" />
<rect x="195.4" y="835.4" width="28.2" height="13.8" rx="6.9" fill="#454c53" stroke="#3e454b" stroke-width="0.8"/>
<text x="209.5" y="845.3" font-size="9.4" fill="#e8c83a" text-anchor="middle" font-weight="normal" letter-spacing="0.4">-0.3</text>
<path d="M249 835.4 L236.4 835.4 A6.9 6.9 0 0 0 236.4 849.2 L249 849.2" fill="#454c53" stroke="#363c42" stroke-width="1"/>
<path d="M249 836.7 L244 836.7 A5.6 5.6 0 0 0 244 847.9 L249 847.9" fill="#596168" stroke="#3a4046" stroke-width="1"/>
<path d="M241.9 841.8 L245.9 838.2 L245.9 845.4 Z" fill="#c4ccd4"/>
<rect x="10" y="858" width="239" height="13" rx="0" fill="url(#barG)" />
<rect x="10" y="858" width="239" height="0.8" rx="0" fill="#2a2f34" />
<text x="22.6" y="868.8" font-size="11" fill="#a9b4be" text-anchor="start" font-weight="bold" textLength="72" lengthAdjust="spacingAndGlyphs" >HARDWARE OUTPUTS</text>
<rect x="103.5" y="859" width="140" height="10" rx="5" fill="#2a2f34" />
<rect x="105.5" y="860" width="136" height="8" rx="4" fill="url(#scrG)" />
<rect x="6" y="863.8" width="11" height="2" rx="0" fill="#2b7d33" />
<rect x="246" y="864" width="3" height="2" rx="0" fill="#2b7d33" />
<rect x="302" y="606" width="183" height="265" rx="0" fill="#25292d" />
<rect x="302" y="606" width="3" height="252" rx="0" fill="#545c64" />
<path d="M306 856.5 L306 611.5 Q306 607.5 310 607.5 L360 607.5 Q364 607.5 364 611.5 L364 856.5 Z" fill="url(#panelB)"/>
<text x="335.2" y="618.7" font-size="9.5" fill="#ffffff" text-anchor="middle" font-weight="normal" style="white-space:pre" stroke="#ffffff" stroke-width="0.3">Speaker  B</text>
<path d="M332.57 626.92 Q336.83 630 341 630 L356.5 630 Q360 630 360 633.5 L360 641.8 Q360 645.3 356.5 645.3 L341 645.3 Q336.83 645.3 332.57 647.28 Z" fill="#25282b"/>
<rect x="336" y="637.7" width="23.5" height="7.1" rx="0" fill="#191c1f" />
<circle cx="323.4" cy="637.1" r="13.7" fill="#25282b" />
<circle cx="323.7" cy="637.4" r="12" fill="url(#knobGd)" />
<rect x="322.6" y="626.5" width="1.9" height="11.6" rx="0" fill="#e0b838" />
<rect x="324.5" y="626.5" width="1.7" height="11.6" rx="0" fill="#0c0c0c" />
<text x="348.8" y="641.9" font-size="10.6" fill="#e8c840" text-anchor="middle" font-weight="normal" textLength="5" lengthAdjust="spacingAndGlyphs" >0</text>
<rect x="311.6" y="656.7" width="47.3" height="17.3" rx="8.6" fill="url(#msGd)" stroke="#62686e" stroke-width="1.3"/>
<text x="346.6" y="669.1" font-size="10" fill="#8a9096" text-anchor="middle" font-weight="normal" textLength="17" lengthAdjust="spacingAndGlyphs" >Link</text>
<rect x="334.5" y="657.5" width="1" height="16" rx="0" fill="#1e2124" />
<text x="323" y="669.1" font-size="10" fill="#b8bec4" text-anchor="middle" font-weight="normal" >M</text>
<rect x="311" y="679.2" width="48.5" height="13.3" rx="6.5" fill="#2e3236" />
<text x="335" y="688.1" font-size="9.2" fill="#aab2ba" text-anchor="middle" font-weight="normal" style="white-space:pre">UFL  UFL</text>
<rect x="310.8" y="695.3" width="13.9" height="135.6" rx="2.5" fill="#0e1114" />
<rect x="311.8" y="696.3" width="11.9" height="133.6" rx="1.5" fill="#20262b" />
<rect x="313.8" y="697.8" width="8" height="12" rx="0" fill="#2e2426" />
<text x="317.9" y="729.1" font-size="9" fill="#a8b8c8" text-anchor="middle" font-weight="normal" textLength="3.8" lengthAdjust="spacingAndGlyphs" >0</text>
<rect x="314" y="725.8" width="1" height="1" rx="0" fill="#8a9aa8" />
<rect x="320.8" y="725.8" width="1" height="1" rx="0" fill="#8a9aa8" />
<rect x="316" y="737" width="3.8" height="1" rx="0" fill="#8e9cab" />
<rect x="316" y="747" width="3.8" height="1" rx="0" fill="#8e9cab" />
<rect x="316" y="756" width="3.8" height="1" rx="0" fill="#8e9cab" />
<rect x="316" y="761" width="3.8" height="1" rx="0" fill="#8e9cab" />
<rect x="316" y="768" width="3.8" height="1" rx="0" fill="#8e9cab" />
<rect x="316" y="773" width="3.8" height="1" rx="0" fill="#8e9cab" />
<rect x="316" y="781" width="3.8" height="1" rx="0" fill="#8e9cab" />
<rect x="316" y="788" width="3.8" height="1" rx="0" fill="#8e9cab" />
<rect x="316" y="799" width="3.8" height="1" rx="0" fill="#8e9cab" />
<rect x="316" y="808" width="3.8" height="1" rx="0" fill="#8e9cab" />
<rect x="316" y="816" width="3.8" height="1" rx="0" fill="#8e9cab" />
<rect x="316" y="822" width="3.8" height="1" rx="0" fill="#8e9cab" />
<rect x="330" y="696.5" width="11" height="134.5" rx="3.5" fill="#25282b" />
<rect x="333.7" y="701.2" width="3.6" height="126.3" rx="1.8" fill="#0f1214" />
<rect x="327.5" y="726.5" width="1.7" height="1" rx="0" fill="#8a96a2" />
<rect x="342.5" y="726.5" width="1.7" height="1" rx="0" fill="#8a96a2" />
<rect x="349.3" y="695.8" width="8.2" height="50.7" rx="3.8" fill="#111315" />
<rect x="350.6" y="697.1" width="5.6" height="48.1" rx="2.8" fill="#2c3034" />
<rect x="348.6" y="732.9" width="10.2" height="14.2" rx="5" fill="url(#trimGd)" stroke="#202326" stroke-width="0.8"/>
<rect x="348.8" y="738.9" width="9.8" height="1.6" rx="0" fill="#78c830" />
<rect x="348.8" y="740.5" width="9.8" height="0.8" rx="0" fill="#c0f080" />
<path d="M364 771.2 L349 771.2 Q346.2 771.2 346.2 774 L346.2 807.4 Q346.2 810.2 349 810.2 L364 810.2" fill="#2e3236" stroke="#25282b" stroke-width="1"/>
<path d="M350.6 785.9 L356.8 779.7" stroke="#7a8086" stroke-width="1.5" stroke-linecap="round"/>
<path d="M360.5 778 A2.2 2.2 0 1 1 358.5 776" fill="none" stroke="#7a8086" stroke-width="1.7"/>
<rect x="346.5" y="790.5" width="17.5" height="1" rx="0" fill="#25282b" />
<text x="355.2" y="804.7" font-size="9.6" fill="#7a8086" text-anchor="middle" font-weight="bold" textLength="10.5" lengthAdjust="spacingAndGlyphs" >EQ</text>
<rect x="331.7" y="811.7" width="9.4" height="20" rx="1" fill="#0e1012" />
<rect x="330.7" y="810.7" width="9.4" height="20.2" rx="0.8" fill="#2a2c2e" />
<rect x="330.7" y="810.7" width="9.4" height="4.2" rx="0.8" fill="#c8c8c8" />
<rect x="330.7" y="815.6" width="9.4" height="1.2" rx="0" fill="#c8c8c8" />
<rect x="330.7" y="817.5" width="9.4" height="1.8" rx="0" fill="#a8a8a8" />
<rect x="330.7" y="819.3" width="9.4" height="1.2" rx="0" fill="#7890a0" />
<rect x="330.7" y="820.5" width="9.4" height="1.4" rx="0" fill="#98aab8" />
<rect x="330.7" y="821.9" width="9.4" height="2" rx="0" fill="#a8a8a8" />
<rect x="330.7" y="824.6" width="9.4" height="1.2" rx="0" fill="#c8c8c8" />
<rect x="330.7" y="826.5" width="9.4" height="4.4" rx="0.8" fill="#c8c8c8" />
<rect x="310.4" y="835.4" width="28.2" height="13.8" rx="6.9" fill="#25292c" stroke="#1e2124" stroke-width="0.8"/>
<text x="324.5" y="845.3" font-size="9.4" fill="#e8c83a" text-anchor="middle" font-weight="normal" letter-spacing="0.4">-oo</text>
<path d="M364 835.4 L351.4 835.4 A6.9 6.9 0 0 0 351.4 849.2 L364 849.2" fill="#25292c" stroke="#1a1d20" stroke-width="1"/>
<path d="M364 836.7 L359 836.7 A5.6 5.6 0 0 0 359 847.9 L364 847.9" fill="#383d42" stroke="#1e2124" stroke-width="1"/>
<path d="M356.9 841.8 L360.9 838.2 L360.9 845.4 Z" fill="#a4aab0"/>
<path d="M366 856.5 L366 611.5 Q366 607.5 370 607.5 L420 607.5 Q424 607.5 424 611.5 L424 856.5 Z" fill="url(#panelB)"/>
<text x="395.2" y="618.7" font-size="9.5" fill="#ffffff" text-anchor="middle" font-weight="normal" style="white-space:pre" stroke="#ffffff" stroke-width="0.3">Main</text>
<path d="M392.57 626.92 Q396.83 630 401 630 L416.5 630 Q420 630 420 633.5 L420 641.8 Q420 645.3 416.5 645.3 L401 645.3 Q396.83 645.3 392.57 647.28 Z" fill="#25282b"/>
<rect x="396" y="637.7" width="23.5" height="7.1" rx="0" fill="#191c1f" />
<circle cx="383.4" cy="637.1" r="13.7" fill="#25282b" />
<circle cx="383.7" cy="637.4" r="12" fill="url(#knobGd)" />
<rect x="382.6" y="626.5" width="1.9" height="11.6" rx="0" fill="#e0b838" />
<rect x="384.5" y="626.5" width="1.7" height="11.6" rx="0" fill="#0c0c0c" />
<text x="408.8" y="641.9" font-size="10.6" fill="#e8c840" text-anchor="middle" font-weight="normal" textLength="5" lengthAdjust="spacingAndGlyphs" >0</text>
<rect x="371.6" y="656.7" width="47.3" height="17.3" rx="8.6" fill="url(#msGd)" stroke="#62686e" stroke-width="1.3"/>
<path d="M395.5 657.4 L410.3 657.4 A7.9 7.9 0 0 1 410.3 673.3 L395.5 673.3 Z" fill="url(#cueG)"/>
<text x="406.8" y="669.1" font-size="10" fill="#b4ecc0" text-anchor="middle" font-weight="normal" textLength="17.5" lengthAdjust="spacingAndGlyphs" >CUE</text>
<rect x="394.5" y="657.5" width="1" height="16" rx="0" fill="#1e2124" />
<text x="383" y="669.1" font-size="10" fill="#b8bec4" text-anchor="middle" font-weight="normal" >M</text>
<rect x="371" y="679.2" width="48.5" height="13.3" rx="6.5" fill="#2e3236" />
<text x="395" y="688.1" font-size="9.2" fill="#aab2ba" text-anchor="middle" font-weight="normal" style="white-space:pre">-40.7 -45.3</text>
<rect x="370.8" y="695.3" width="13.9" height="135.6" rx="2.5" fill="#0e1114" />
<rect x="371.8" y="696.3" width="11.9" height="133.6" rx="1.5" fill="#20262b" />
<rect x="373.8" y="697.8" width="8" height="12" rx="0" fill="#2e2426" />
<rect x="373.9" y="809.3" width="3.1" height="20.1" rx="0" fill="#7ee000" />
<rect x="378.8" y="809.3" width="3.1" height="20.1" rx="0" fill="#7ee000" />
<rect x="377" y="809.3" width="1.8" height="20.1" rx="0" fill="#3e8a00" />
<rect x="373.9" y="799.5" width="4.1" height="2" rx="0" fill="#a8e020" />
<rect x="378.8" y="800.5" width="3.2" height="2" rx="0" fill="#a8e020" />
<text x="377.9" y="729.1" font-size="9" fill="#a8b8c8" text-anchor="middle" font-weight="normal" textLength="3.8" lengthAdjust="spacingAndGlyphs" >0</text>
<rect x="374" y="725.8" width="1" height="1" rx="0" fill="#8a9aa8" />
<rect x="380.8" y="725.8" width="1" height="1" rx="0" fill="#8a9aa8" />
<rect x="376" y="737" width="3.8" height="1" rx="0" fill="#8e9cab" />
<rect x="376" y="747" width="3.8" height="1" rx="0" fill="#8e9cab" />
<rect x="376" y="756" width="3.8" height="1" rx="0" fill="#8e9cab" />
<rect x="376" y="761" width="3.8" height="1" rx="0" fill="#8e9cab" />
<rect x="376" y="768" width="3.8" height="1" rx="0" fill="#8e9cab" />
<rect x="376" y="773" width="3.8" height="1" rx="0" fill="#8e9cab" />
<rect x="376" y="781" width="3.8" height="1" rx="0" fill="#8e9cab" />
<rect x="376" y="788" width="3.8" height="1" rx="0" fill="#8e9cab" />
<rect x="376" y="799" width="3.8" height="1" rx="0" fill="#8e9cab" />
<rect x="376" y="808" width="3.8" height="1" rx="0" fill="#8e9cab" />
<rect x="376" y="816" width="3.8" height="1" rx="0" fill="#8e9cab" />
<rect x="376" y="822" width="3.8" height="1" rx="0" fill="#8e9cab" />
<rect x="390" y="696.5" width="11" height="134.5" rx="3.5" fill="#25282b" />
<rect x="393.7" y="701.2" width="3.6" height="126.3" rx="1.8" fill="#0f1214" />
<rect x="387.5" y="726.5" width="1.7" height="1" rx="0" fill="#8a96a2" />
<rect x="402.5" y="726.5" width="1.7" height="1" rx="0" fill="#8a96a2" />
<rect x="409.3" y="695.8" width="8.2" height="50.7" rx="3.8" fill="#111315" />
<rect x="410.6" y="697.1" width="5.6" height="48.1" rx="2.8" fill="#2c3034" />
<rect x="408.6" y="732.9" width="10.2" height="14.2" rx="5" fill="url(#trimGd)" stroke="#202326" stroke-width="0.8"/>
<rect x="408.8" y="738.9" width="9.8" height="1.6" rx="0" fill="#78c830" />
<rect x="408.8" y="740.5" width="9.8" height="0.8" rx="0" fill="#c0f080" />
<path d="M424 771.2 L409 771.2 Q406.2 771.2 406.2 774 L406.2 807.4 Q406.2 810.2 409 810.2 L424 810.2" fill="#2e3236" stroke="#25282b" stroke-width="1"/>
<path d="M410.6 785.9 L416.8 779.7" stroke="#7a8086" stroke-width="1.5" stroke-linecap="round"/>
<path d="M420.5 778 A2.2 2.2 0 1 1 418.5 776" fill="none" stroke="#7a8086" stroke-width="1.7"/>
<rect x="406.5" y="790.5" width="17.5" height="1" rx="0" fill="#25282b" />
<text x="415.2" y="804.7" font-size="9.6" fill="#7a8086" text-anchor="middle" font-weight="bold" textLength="10.5" lengthAdjust="spacingAndGlyphs" >EQ</text>
<rect x="391.7" y="766.5" width="9.4" height="20" rx="1" fill="#0e1012" />
<rect x="390.7" y="765.5" width="9.4" height="20.2" rx="0.8" fill="#2a2c2e" />
<rect x="390.7" y="765.5" width="9.4" height="4.2" rx="0.8" fill="#c8c8c8" />
<rect x="390.7" y="770.4" width="9.4" height="1.2" rx="0" fill="#c8c8c8" />
<rect x="390.7" y="772.3" width="9.4" height="1.8" rx="0" fill="#a8a8a8" />
<rect x="390.7" y="774.1" width="9.4" height="1.2" rx="0" fill="#7890a0" />
<rect x="390.7" y="775.3" width="9.4" height="1.4" rx="0" fill="#98aab8" />
<rect x="390.7" y="776.7" width="9.4" height="2" rx="0" fill="#a8a8a8" />
<rect x="390.7" y="779.4" width="9.4" height="1.2" rx="0" fill="#c8c8c8" />
<rect x="390.7" y="781.3" width="9.4" height="4.4" rx="0.8" fill="#c8c8c8" />
<rect x="370.4" y="835.4" width="28.2" height="13.8" rx="6.9" fill="#25292c" stroke="#1e2124" stroke-width="0.8"/>
<text x="384.5" y="845.3" font-size="9.4" fill="#e8c83a" text-anchor="middle" font-weight="normal" letter-spacing="0.4">-20.5</text>
<path d="M424 835.4 L411.4 835.4 A6.9 6.9 0 0 0 411.4 849.2 L424 849.2" fill="#25292c" stroke="#1a1d20" stroke-width="1"/>
<path d="M424 836.7 L419 836.7 A5.6 5.6 0 0 0 419 847.9 L424 847.9" fill="#383d42" stroke="#1e2124" stroke-width="1"/>
<path d="M416.9 841.8 L420.9 838.2 L420.9 845.4 Z" fill="#a4aab0"/>
<path d="M426 858 L426 612 Q426 608 430 608 L480 608 Q484 608 484 612 L484 858 Z" fill="url(#panelB)"/>
<rect x="430.4" y="632.6" width="47.8" height="15.6" rx="7.5" fill="url(#btnG)" stroke="#1e2226" stroke-width="1"/>
<text x="454.3" y="644" font-size="10" fill="#c4ccd4" text-anchor="middle" font-weight="normal" letter-spacing="-0.2">Dim</text>
<rect x="430.4" y="653.8" width="47.8" height="15.2" rx="7.5" fill="url(#btnG)" stroke="#1e2226" stroke-width="1"/>
<text x="454.3" y="665" font-size="10" fill="#c4ccd4" text-anchor="middle" font-weight="normal" letter-spacing="-0.2">Recall</text>
<rect x="430.4" y="674.9" width="47.8" height="15.1" rx="7.5" fill="url(#btnG)" stroke="#1e2226" stroke-width="1"/>
<text x="454.3" y="686.05" font-size="10" fill="#c4ccd4" text-anchor="middle" font-weight="normal" letter-spacing="-0.2">Speaker B</text>
<rect x="430.4" y="695.5" width="47.8" height="15.5" rx="7.5" fill="url(#btnG)" stroke="#1e2226" stroke-width="1"/>
<text x="454.3" y="706.85" font-size="10" fill="#c4ccd4" text-anchor="middle" font-weight="normal" letter-spacing="-0.2">Mono</text>
<rect x="430.4" y="723.7" width="47.8" height="15.3" rx="7.5" fill="url(#btnG)" stroke="#1e2226" stroke-width="1"/>
<text x="454.3" y="734.95" font-size="10" fill="#c4ccd4" text-anchor="middle" font-weight="normal" letter-spacing="-0.2">Talkback</text>
<rect x="430.4" y="745" width="47.8" height="15" rx="7.5" fill="url(#btnG)" stroke="#1e2226" stroke-width="1"/>
<text x="454.3" y="756.1" font-size="10" fill="#7a848e" text-anchor="middle" font-weight="normal" letter-spacing="-0.2">Ext. Input</text>
<rect x="430.4" y="766.9" width="47.8" height="14.8" rx="7.5" fill="url(#btnG)" stroke="#1e2226" stroke-width="1"/>
<text x="454.3" y="777.9" font-size="10" fill="#c4ccd4" text-anchor="middle" font-weight="normal" letter-spacing="-0.2">Mute FX</text>
<rect x="430.4" y="818" width="47.8" height="14.9" rx="7.5" fill="url(#btnG)" stroke="#1e2226" stroke-width="1"/>
<text x="450" y="829.05" font-size="10" fill="#c4ccd4" text-anchor="middle" font-weight="normal" letter-spacing="-0.2">Assign</text>
<rect x="430" y="717" width="50" height="1" rx="0" fill="#1c2024" />
<path d="M466.5 824 L472.5 824 L469.5 827.5 Z" fill="#c4ccd4"/>
<rect x="302" y="858" width="183" height="13" rx="0" fill="url(#barG)" />
<rect x="302" y="858" width="93" height="13" rx="0" fill="#4c5a68" />
<circle cx="312.3" cy="864.5" r="5" fill="#26303a" />
<path d="M311.5 862 L315.5 864.5 L311.5 867 Z" fill="#a8b8c8"/>
<text x="320" y="868.8" font-size="11" fill="#a9b4be" text-anchor="start" font-weight="bold" textLength="54" lengthAdjust="spacingAndGlyphs" >CONTROL ROOM</text>
<rect x="399.5" y="859" width="81" height="10" rx="5" fill="#2a2f34" />
<rect x="401.5" y="860" width="77" height="8" rx="4" fill="url(#scrG)" />
<rect x="487" y="57" width="90" height="26" rx="0" fill="url(#devG)" />
<rect x="494" y="63.5" width="77" height="15" rx="7.5" fill="#292c2f" stroke="#1a1b1c" stroke-width="1"/>
<text x="502.4" y="74" font-size="10" fill="#c8ccd0" font-family="Liberation Mono, monospace" textLength="59" lengthAdjust="spacingAndGlyphs">Babyface Pro</text>
<path d="M562.5 69.8 L567.5 69.8 L565 72.6 Z" fill="#c8ccd0"/>
<rect x="487" y="83" width="90" height="1" rx="0" fill="#141516" />
<rect x="487" y="84" width="90" height="76" rx="0" fill="#2e3134" />
<circle cx="513.8" cy="109.6" r="21.8" fill="#202224" />
<circle cx="513.8" cy="109.6" r="14" fill="#34373a" />
<text x="513.8" y="114.4" font-size="12.5" fill="#8e9398" text-anchor="middle" font-weight="normal" textLength="12.5" lengthAdjust="spacingAndGlyphs" >FX</text>
<text x="514.8" y="132" font-size="10.5" fill="#b8bcc0" text-anchor="middle" font-weight="normal" >%</text>
<rect x="542.6" y="89.7" width="29" height="18.8" rx="4" fill="#26292c" stroke="#1c1e20" stroke-width="1"/>
<rect x="542.6" y="112.9" width="29" height="18.8" rx="4" fill="#26292c" stroke="#1c1e20" stroke-width="1"/>
<path d="M565 100.5 Q559 93.5 552 98" fill="none" stroke="#9aa0a6" stroke-width="2"/><path d="M549 100 L554.5 94.5 L556 101.5 Z" fill="#9aa0a6"/>
<path d="M549 124 Q556 117.5 563 121.5" fill="none" stroke="#62686e" stroke-width="2"/><path d="M566.5 123 L560 118.5 L560.5 125 Z" fill="#62686e"/>
<rect x="494.8" y="138.2" width="77.8" height="17.5" rx="8.7" fill="#26292c" stroke="#5a5e62" stroke-width="1.2"/>
<path d="M520.2 138.8 L503.5 138.8 A8.1 8.1 0 0 0 503.5 155.1 L520.2 155.1 Z" fill="url(#blueG)"/>
<rect x="521.2" y="138.8" width="24.8" height="16.3" rx="0" fill="url(#orgG)" />
<rect x="520.2" y="138.8" width="1" height="16.3" rx="0" fill="#101214" />
<text x="508.5" y="151.4" font-size="10.5" fill="#ffffff" text-anchor="middle" font-weight="bold" >M</text>
<text x="533.8" y="151.4" font-size="10.5" fill="#ffffff" text-anchor="middle" font-weight="bold" >S</text>
<text x="558.5" y="151.4" font-size="10.5" fill="#b4b8bc" text-anchor="middle" font-weight="bold" >F</text>
<rect x="488" y="160.5" width="89" height="18" rx="0" fill="url(#hdrG)" />
<text x="493.5" y="173.1" font-size="11.5" fill="#9cb0c2" text-anchor="start" font-weight="normal" textLength="61" lengthAdjust="spacingAndGlyphs" >View Options</text>
<circle cx="566.8" cy="170" r="5.6" fill="#1c2a38" />
<path d="M563.8 168.5 L569.8 168.5 L566.8 172 Z" fill="#c0ccd8"/>
<rect x="487" y="178.5" width="90" height="134.5" rx="0" fill="#26292c" />
<rect x="495.2" y="186" width="76.2" height="122.7" rx="5" fill="url(#cyanG)" stroke="#0a2430" stroke-width="1.8"/>
<text x="532" y="198.8" font-size="10.5" fill="#0a1a20" text-anchor="middle" font-weight="bold" textLength="55" lengthAdjust="spacingAndGlyphs" >ROUTING MODE</text>
<rect x="499.7" y="203.5" width="66" height="14.7" rx="3" fill="none" stroke="#c8f4ff" stroke-width="1.4"/>
<rect x="500.5" y="204.3" width="37.5" height="13.1" rx="2" fill="#d8f2fa" />
<text x="519.3" y="214.8" font-size="10.5" fill="#0e2a34" text-anchor="middle" font-weight="normal" textLength="28" lengthAdjust="spacingAndGlyphs" >SUBMIX</text>
<text x="551.5" y="214.8" font-size="10.5" fill="#ffffff" text-anchor="middle" font-weight="normal" textLength="17" lengthAdjust="spacingAndGlyphs" >FREE</text>
<text x="532" y="231.6" font-size="10.5" fill="#0a1a20" text-anchor="middle" font-weight="bold" textLength="53" lengthAdjust="spacingAndGlyphs" >LEVEL METERS</text>
<rect x="499.4" y="236.2" width="39.4" height="15.2" rx="3" fill="none" stroke="#c8f4ff" stroke-width="1.4"/>
<text x="519.1" y="247.6" font-size="10.5" fill="#ffffff" text-anchor="middle" font-weight="normal" textLength="28" lengthAdjust="spacingAndGlyphs" >POST FX</text>
<rect x="542.4" y="236.2" width="23.3" height="15.2" rx="3" fill="none" stroke="#c8f4ff" stroke-width="1.4"/>
<text x="554.05" y="247.6" font-size="10.5" fill="#ffffff" text-anchor="middle" font-weight="normal" textLength="15" lengthAdjust="spacingAndGlyphs" >RMS</text>
<rect x="499.4" y="269.3" width="28.1" height="15.2" rx="3" fill="none" stroke="#c8f4ff" stroke-width="1.4"/>
<text x="513.45" y="280.7" font-size="10.5" fill="#ffffff" text-anchor="middle" font-weight="normal" textLength="10" lengthAdjust="spacingAndGlyphs" >FX</text>
<rect x="531" y="269.3" width="34.7" height="15.2" rx="3" fill="none" stroke="#c8f4ff" stroke-width="1.4"/>
<text x="548.35" y="280.7" font-size="10.5" fill="#ffffff" text-anchor="middle" font-weight="normal" textLength="19" lengthAdjust="spacingAndGlyphs" >TRIM</text>
<rect x="499.4" y="288.1" width="28.1" height="15.3" rx="3" fill="none" stroke="#c8f4ff" stroke-width="1.4"/>
<text x="513.45" y="299.5" font-size="10.5" fill="#ffffff" text-anchor="middle" font-weight="normal" textLength="20" lengthAdjust="spacingAndGlyphs" >2ROW</text>
<rect x="531" y="288.1" width="34.7" height="15.3" rx="3" fill="none" stroke="#c8f4ff" stroke-width="1.4"/>
<text x="548.35" y="299.5" font-size="10.5" fill="#ffffff" text-anchor="middle" font-weight="normal" textLength="25" lengthAdjust="spacingAndGlyphs" >NAMES</text>
<text x="532" y="265" font-size="10.5" fill="#0a1a20" text-anchor="middle" font-weight="bold" textLength="24" lengthAdjust="spacingAndGlyphs" >SHOW</text>
<rect x="488" y="316.3" width="89" height="18" rx="0" fill="url(#hdrG)" />
<text x="505" y="328.9" font-size="11.5" fill="#9cb0c2" text-anchor="start" font-weight="normal" textLength="47.5" lengthAdjust="spacingAndGlyphs" >Snapshots</text>
<circle cx="566.8" cy="325.8" r="5.6" fill="#1c2a38" />
<path d="M563.8 324.3 L569.8 324.3 L566.8 327.8 Z" fill="#c0ccd8"/>
<rect x="487" y="334.3" width="90" height="127.2" rx="0" fill="#26292c" />
<rect x="493.4" y="339.6" width="78.4" height="95.8" rx="4" fill="#16191c" />
<rect x="494.5" y="340.6" width="76.5" height="10.5" rx="0" fill="#1c2024" />
<rect x="495.2" y="340.6" width="17.6" height="10.2" rx="2" fill="#34383c" />
<text x="516.7" y="349.2" font-size="9.4" fill="#d8dce0" text-anchor="start" font-weight="normal" style="white-space:pre">Mix  1</text>
<rect x="494.5" y="352.6" width="76.5" height="10.5" rx="0" fill="#1c2024" />
<rect x="495.2" y="352.6" width="17.6" height="10.2" rx="2" fill="#34383c" />
<text x="516.7" y="361.2" font-size="9.4" fill="#d8dce0" text-anchor="start" font-weight="normal" style="white-space:pre">Mix  2</text>
<rect x="494.5" y="364.6" width="76.5" height="10.5" rx="0" fill="#1c2024" />
<rect x="495.2" y="364.6" width="17.6" height="10.2" rx="2" fill="#34383c" />
<text x="516.7" y="373.2" font-size="9.4" fill="#d8dce0" text-anchor="start" font-weight="normal" style="white-space:pre">Mix  3</text>
<rect x="494.5" y="376.6" width="76.5" height="10.5" rx="0" fill="#1c2024" />
<rect x="495.2" y="376.6" width="17.6" height="10.2" rx="2" fill="#34383c" />
<text x="516.7" y="385.2" font-size="9.4" fill="#d8dce0" text-anchor="start" font-weight="normal" style="white-space:pre">Mix  4</text>
<rect x="494.5" y="388.6" width="76.5" height="10.5" rx="0" fill="#1c2024" />
<rect x="495.2" y="388.6" width="17.6" height="10.2" rx="2" fill="#34383c" />
<text x="516.7" y="397.2" font-size="9.4" fill="#d8dce0" text-anchor="start" font-weight="normal" style="white-space:pre">Mix  5</text>
<rect x="494.5" y="400.6" width="76.5" height="10.5" rx="0" fill="#1c2024" />
<rect x="495.2" y="400.6" width="17.6" height="10.2" rx="2" fill="#34383c" />
<text x="516.7" y="409.2" font-size="9.4" fill="#d8dce0" text-anchor="start" font-weight="normal" style="white-space:pre">Mix  6</text>
<rect x="494.5" y="412.6" width="76.5" height="10.5" rx="0" fill="#1c2024" />
<rect x="495.2" y="412.6" width="17.6" height="10.2" rx="2" fill="#34383c" />
<text x="516.7" y="421.2" font-size="9.4" fill="#d8dce0" text-anchor="start" font-weight="normal" style="white-space:pre">Mix  7</text>
<rect x="494.5" y="424.6" width="76.5" height="10.5" rx="0" fill="#1c2024" />
<rect x="495.2" y="424.6" width="17.6" height="10.2" rx="2" fill="#34383c" />
<text x="516.7" y="433.2" font-size="9.4" fill="#d8dce0" text-anchor="start" font-weight="normal" style="white-space:pre">Mix  8</text>
<rect x="507.8" y="442.3" width="51.9" height="13.7" rx="6.8" fill="url(#btn2G)" stroke="#1a1c1e" stroke-width="1"/>
<text x="533.8" y="452.8" font-size="10" fill="#a0a6ac" text-anchor="middle" font-weight="normal" >Store</text>
<rect x="488" y="464.7" width="89" height="18" rx="0" fill="url(#hdrG)" />
<text x="514.5" y="477.3" font-size="11.5" fill="#9cb0c2" text-anchor="start" font-weight="normal" textLength="32.7" lengthAdjust="spacingAndGlyphs" >Groups</text>
<circle cx="566.8" cy="474.2" r="5.6" fill="#1c2a38" />
<path d="M563.8 472.7 L569.8 472.7 L566.8 476.2 Z" fill="#c0ccd8"/>
<rect x="487" y="482.7" width="90" height="115.3" rx="0" fill="#26292c" />
<rect x="493.8" y="488.3" width="76.9" height="82.4" rx="0" fill="#121518" />
<rect x="494.3" y="488.8" width="75.9" height="16.7" rx="0" fill="#182028" />
<text x="506.8" y="501.4" font-size="10.6" fill="#8fb0c6" text-anchor="middle" font-weight="normal" textLength="20.7" lengthAdjust="spacingAndGlyphs" >Mute</text>
<text x="531.8" y="501.4" font-size="10.6" fill="#8fb0c6" text-anchor="middle" font-weight="normal" textLength="18.2" lengthAdjust="spacingAndGlyphs" >Solo</text>
<text x="556.6" y="501.4" font-size="10.6" fill="#8fb0c6" text-anchor="middle" font-weight="normal" textLength="23" lengthAdjust="spacingAndGlyphs" >Fader</text>
<rect x="494.5" y="506" width="24.2" height="15.3" rx="0" fill="#2a3036" />
<text x="506.6" y="518" font-size="10.4" fill="#e0e4e8" text-anchor="middle" font-weight="normal" >1</text>
<rect x="519.7" y="506" width="24.2" height="15.3" rx="0" fill="#2a3036" />
<text x="531.8" y="518" font-size="10.4" fill="#e0e4e8" text-anchor="middle" font-weight="normal" >1</text>
<rect x="544.9" y="506" width="25.3" height="15.3" rx="0" fill="#2a3036" />
<text x="557.55" y="518" font-size="10.4" fill="#e0e4e8" text-anchor="middle" font-weight="normal" >1</text>
<rect x="494.5" y="522.3" width="24.2" height="15.3" rx="0" fill="#2a3036" />
<text x="506.6" y="534.3" font-size="10.4" fill="#e0e4e8" text-anchor="middle" font-weight="normal" >2</text>
<rect x="519.7" y="522.3" width="24.2" height="15.3" rx="0" fill="#2a3036" />
<text x="531.8" y="534.3" font-size="10.4" fill="#e0e4e8" text-anchor="middle" font-weight="normal" >2</text>
<rect x="544.9" y="522.3" width="25.3" height="15.3" rx="0" fill="#2a3036" />
<text x="557.55" y="534.3" font-size="10.4" fill="#e0e4e8" text-anchor="middle" font-weight="normal" >2</text>
<rect x="494.5" y="538.6" width="24.2" height="15.3" rx="0" fill="#2a3036" />
<text x="506.6" y="550.6" font-size="10.4" fill="#e0e4e8" text-anchor="middle" font-weight="normal" >3</text>
<rect x="519.7" y="538.6" width="24.2" height="15.3" rx="0" fill="#2a3036" />
<text x="531.8" y="550.6" font-size="10.4" fill="#e0e4e8" text-anchor="middle" font-weight="normal" >3</text>
<rect x="544.9" y="538.6" width="25.3" height="15.3" rx="0" fill="#2a3036" />
<text x="557.55" y="550.6" font-size="10.4" fill="#e0e4e8" text-anchor="middle" font-weight="normal" >3</text>
<rect x="494.5" y="554.9" width="24.2" height="15.3" rx="0" fill="#2a3036" />
<text x="506.6" y="566.9" font-size="10.4" fill="#e0e4e8" text-anchor="middle" font-weight="normal" >4</text>
<rect x="519.7" y="554.9" width="24.2" height="15.3" rx="0" fill="#2a3036" />
<text x="531.8" y="566.9" font-size="10.4" fill="#e0e4e8" text-anchor="middle" font-weight="normal" >4</text>
<rect x="544.9" y="554.9" width="25.3" height="15.3" rx="0" fill="#2a3036" />
<text x="557.55" y="566.9" font-size="10.4" fill="#e0e4e8" text-anchor="middle" font-weight="normal" >4</text>
<rect x="493.8" y="577" width="78" height="14" rx="7" fill="url(#btn2G)" stroke="#1a1c1e" stroke-width="1"/>
<rect x="532.2" y="577.5" width="0.8" height="13" rx="0" fill="#1a1c1e" />
<text x="513" y="587.6" font-size="10" fill="#a0a6ac" text-anchor="middle" font-weight="normal" >Edit</text>
<text x="552.5" y="587.6" font-size="10" fill="#a0a6ac" text-anchor="middle" font-weight="normal" >Clear</text>
<rect x="488" y="601.3" width="89" height="18" rx="0" fill="url(#hdrG)" />
<text x="493.4" y="613.9" font-size="11.5" fill="#9cb0c2" text-anchor="start" font-weight="normal" textLength="62.8" lengthAdjust="spacingAndGlyphs" >Layout Presets</text>
<circle cx="566.8" cy="610.8" r="5.6" fill="#1c2a38" />
<path d="M563.8 609.3 L569.8 609.3 L566.8 612.8 Z" fill="#c0ccd8"/>
<rect x="487" y="619.3" width="90" height="129.2" rx="0" fill="#26292c" />
<rect x="494" y="625.1" width="78.3" height="13.8" rx="6.9" fill="url(#btn2G)" stroke="#1a1c1e" stroke-width="1"/>
<rect x="532.5" y="625.6" width="0.8" height="12.9" rx="0" fill="#1a1c1e" />
<text x="513.3" y="635.6" font-size="10" fill="#a0a6ac" text-anchor="middle" font-weight="normal" >All</text>
<text x="552.5" y="635.6" font-size="10" fill="#a0a6ac" text-anchor="middle" font-weight="normal" >Sub</text>
<rect x="493.4" y="645.7" width="78.4" height="73" rx="4" fill="#16191c" />
<rect x="494.5" y="646.7" width="76.5" height="10.5" rx="0" fill="#1c2024" />
<rect x="495.2" y="646.7" width="17.6" height="10.2" rx="2" fill="#34383c" />
<text x="516.7" y="655.3" font-size="9.4" fill="#d8dce0" text-anchor="start" font-weight="normal" style="white-space:pre">Layout  1</text>
<rect x="494.5" y="658.87" width="76.5" height="10.5" rx="0" fill="#1c2024" />
<rect x="495.2" y="658.87" width="17.6" height="10.2" rx="2" fill="#34383c" />
<text x="516.7" y="667.47" font-size="9.4" fill="#d8dce0" text-anchor="start" font-weight="normal" style="white-space:pre">Layout  2</text>
<rect x="494.5" y="671.04" width="76.5" height="10.5" rx="0" fill="#1c2024" />
<rect x="495.2" y="671.04" width="17.6" height="10.2" rx="2" fill="#34383c" />
<text x="516.7" y="679.64" font-size="9.4" fill="#d8dce0" text-anchor="start" font-weight="normal" style="white-space:pre">Layout  3</text>
<rect x="494.5" y="683.21" width="76.5" height="10.5" rx="0" fill="#1c2024" />
<rect x="495.2" y="683.21" width="17.6" height="10.2" rx="2" fill="#34383c" />
<text x="516.7" y="691.81" font-size="9.4" fill="#d8dce0" text-anchor="start" font-weight="normal" style="white-space:pre">Layout  4</text>
<rect x="494.5" y="695.38" width="76.5" height="10.5" rx="0" fill="#1c2024" />
<rect x="495.2" y="695.38" width="17.6" height="10.2" rx="2" fill="#34383c" />
<text x="516.7" y="703.98" font-size="9.4" fill="#d8dce0" text-anchor="start" font-weight="normal" style="white-space:pre">Layout  5</text>
<rect x="494.5" y="707.55" width="76.5" height="10.5" rx="0" fill="#1c2024" />
<rect x="495.2" y="707.55" width="17.6" height="10.2" rx="2" fill="#34383c" />
<text x="516.7" y="716.15" font-size="9.4" fill="#d8dce0" text-anchor="start" font-weight="normal" style="white-space:pre">Layout  6</text>
<rect x="507.8" y="726.2" width="51.9" height="14" rx="7" fill="url(#btn2G)" stroke="#1a1c1e" stroke-width="1"/>
<text x="533.8" y="736.8" font-size="10" fill="#a0a6ac" text-anchor="middle" font-weight="normal" >Store</text>
<rect x="487" y="57" width="1" height="692.5" rx="0" fill="#0e1012" />
<rect x="487" y="748.5" width="90" height="1" rx="0" fill="#0e1012" />
</svg></body></html>
